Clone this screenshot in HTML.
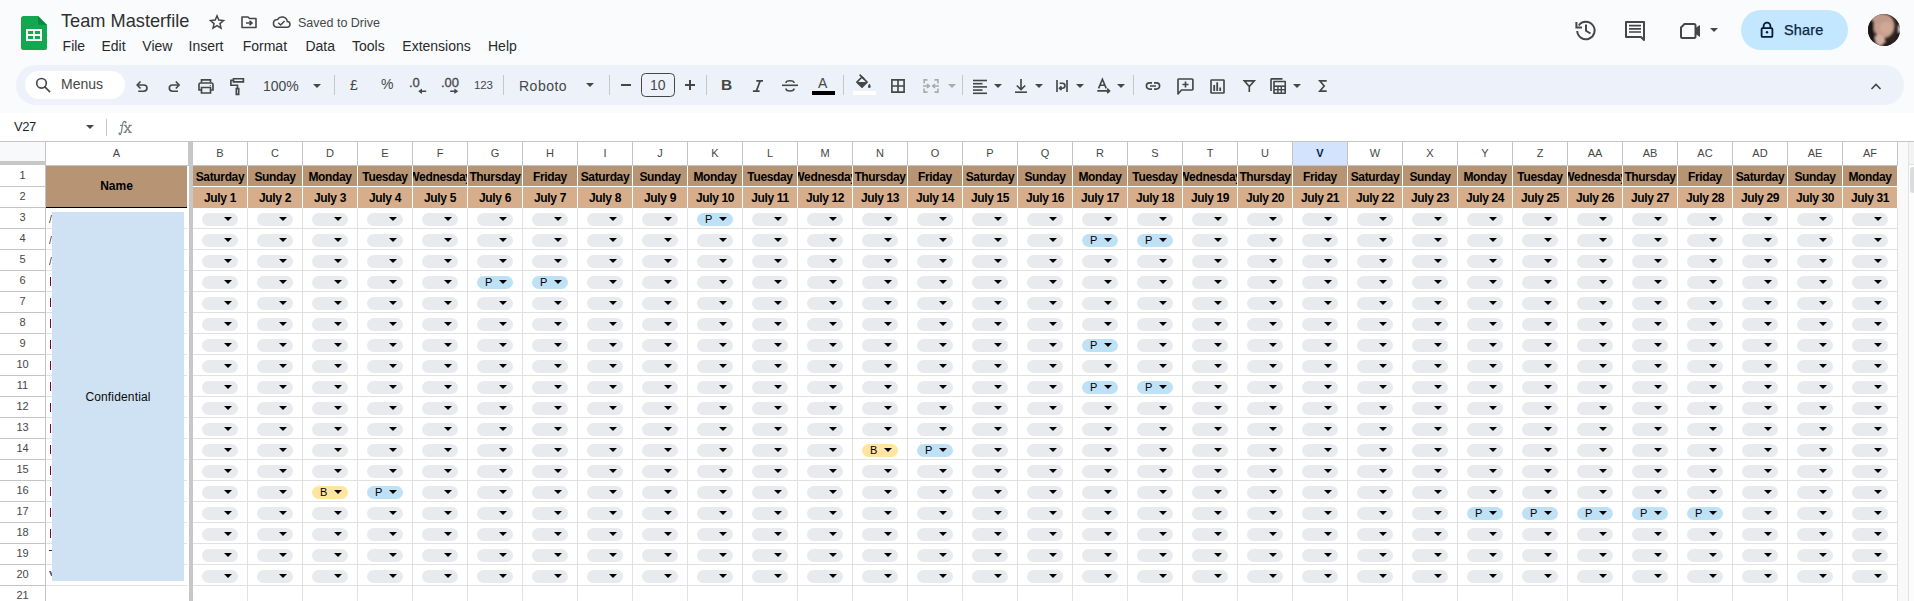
<!DOCTYPE html>
<html><head><meta charset="utf-8"><title>Team Masterfile</title>
<style>
*{box-sizing:border-box;margin:0;padding:0}
html,body{width:1914px;height:601px;overflow:hidden;background:#fff;font-family:"Liberation Sans",sans-serif}
.a{position:absolute}
.t{position:absolute;white-space:nowrap}
.c1{position:absolute;height:20px;width:54px;background:#b69474;overflow:hidden;display:flex;justify-content:center;white-space:nowrap;font-weight:bold;font-size:12px;line-height:22px;letter-spacing:-0.35px;color:#000}
.c2{position:absolute;height:21px;width:54px;background:#d6ae8c;overflow:hidden;display:flex;justify-content:center;white-space:nowrap;font-weight:bold;font-size:12px;line-height:22px;letter-spacing:-0.35px;color:#000}
.ch{position:absolute;width:36px;height:13px;border-radius:7px;background:#e8eaed}
.ar{position:absolute;width:0;height:0;border-left:4px solid transparent;border-right:4px solid transparent;border-top:4px solid #000}
.cl{position:absolute;font-size:11px;color:#000;line-height:13px}
.hd{position:absolute;top:142px;height:23px;width:54px;text-align:center;font-size:11px;line-height:23px;color:#444746}
.rn{position:absolute;left:0;width:45px;text-align:center;font-size:11px;line-height:20px;height:20px;color:#444746}
</style></head><body>

<div class="a" style="left:0;top:0;width:1914px;height:113px;background:#f9fbfd"></div>
<svg class="a" style="left:0;top:0" width="1914" height="113" viewBox="0 0 1914 113">
<path d="M23.5 16 H38 L47 25 V48 A2 2 0 0 1 45 50 H23.5 A2.5 2.5 0 0 1 21 47.5 V18.5 A2.5 2.5 0 0 1 23.5 16 Z" fill="#12a84f"/>
<path d="M38 16 L47 25 H40 A2 2 0 0 1 38 23 Z" fill="#0a8a3e"/>
<rect x="26" y="29" width="16" height="12" fill="#fff"/>
<rect x="28" y="31" width="5.2" height="3" fill="#12a84f"/>
<rect x="34.8" y="31" width="5.2" height="3" fill="#12a84f"/>
<rect x="28" y="36" width="5.2" height="3" fill="#12a84f"/>
<rect x="34.8" y="36" width="5.2" height="3" fill="#12a84f"/>

<path d="M217.00 15.80 L218.82 20.09 L223.47 20.50 L219.95 23.56 L221.00 28.10 L217.00 25.70 L213.00 28.10 L214.05 23.56 L210.53 20.50 L215.18 20.09 Z" fill="none" stroke="#444746" stroke-width="1.5" stroke-linejoin="miter"/>
<path d="M242 17 H248 L249.5 18.5 H256 V27.5 H242 Z" fill="none" stroke="#444746" stroke-width="1.6" stroke-linejoin="round"/>
<path d="M246 23 H251.5 M249.5 20.8 L252 23 L249.5 25.2" fill="none" stroke="#444746" stroke-width="1.6"/>
<path d="M276.5 27.2 H287 A2.8 2.8 0 0 0 287.3 21.6 A5.3 5.3 0 0 0 277.5 19.5 A3.9 3.9 0 0 0 276.5 27.2 Z" fill="none" stroke="#444746" stroke-width="1.5"/>
<path d="M278.3 22.8 L280.6 25 L284.6 21" fill="none" stroke="#444746" stroke-width="1.5"/>
<path d="M1578.8 25.5 A8.7 8.7 0 1 1 1577.2 31" fill="none" stroke="#444746" stroke-width="2"/>
<path d="M1576.4 22 V27.6 H1582" fill="none" stroke="#444746" stroke-width="2"/>
<path d="M1586 24.5 V30.8 L1590.5 33.5" fill="none" stroke="#444746" stroke-width="2"/>
<path d="M1626 22 H1644 V40 L1641 37 H1626 Z" fill="none" stroke="#444746" stroke-width="2" stroke-linejoin="round"/>
<path d="M1629 25.6 H1641 M1629 28.8 H1641 M1629 32 H1641" fill="none" stroke="#444746" stroke-width="1.7"/>
<path d="M1684.5 24 H1694 A1.5 1.5 0 0 1 1695.5 25.5 V36.5 A1.5 1.5 0 0 1 1694 38 H1682.5 A1.5 1.5 0 0 1 1681 36.5 V27.5 Z" fill="none" stroke="#444746" stroke-width="2" stroke-linejoin="round"/>
<path d="M1695.5 28 L1700 25 V37 L1695.5 34 Z" fill="#444746"/>
<path d="M1710 28 H1718 L1714 32 Z" fill="#444746"/>
<rect x="1741" y="10" width="107" height="40" rx="20" fill="#c2e7ff"/>
<path d="M1763.6 28 V26 A3.4 3.4 0 0 1 1770.4 26 V28" fill="none" stroke="#001d35" stroke-width="1.8"/>
<rect x="1761.6" y="28.2" width="10.8" height="8.7" rx="1" fill="none" stroke="#001d35" stroke-width="1.8"/>
<circle cx="1767" cy="32.3" r="1.2" fill="#001d35"/>
<defs><clipPath id="av"><circle cx="1884" cy="30" r="16"/></clipPath>
<filter id="bl" x="-20%" y="-20%" width="140%" height="140%"><feGaussianBlur stdDeviation="1.1"/></filter></defs>
<g clip-path="url(#av)"><rect x="1866" y="12" width="36" height="36" fill="#2e221f"/>
<g filter="url(#bl)">
<ellipse cx="1884" cy="26" rx="10.5" ry="12" fill="#c59d8c"/>
<ellipse cx="1879" cy="18" rx="8" ry="5" fill="#bf9a8a"/>
<ellipse cx="1886" cy="28" rx="6" ry="6" fill="#d0a896"/>
<ellipse cx="1880" cy="40" rx="5" ry="6" fill="#d2b0a2" transform="rotate(-30 1880 40)"/>
<path d="M1892 13 Q1899 18 1898 30 Q1897 40 1893 46 L1902 46 V12 Z" fill="#1e1614"/>
<path d="M1866 20 Q1872 17 1874 24 Q1873 34 1876 42 L1866 46 Z" fill="#1b1412"/>
<rect x="1898" y="26" width="3" height="6" fill="#d8d8d8"/>
<ellipse cx="1887" cy="45" rx="5" ry="3" fill="#231a18"/>
</g></g>
</svg>
<div class="t" style="left:61px;top:9px;font-size:18.2px;line-height:24px;color:#303030">Team Masterfile</div>
<div class="t" style="left:298px;top:15px;font-size:12.5px;line-height:16px;color:#444746">Saved to Drive</div>
<div class="t" style="left:62.6px;top:38px;font-size:14px;line-height:16px;color:#2a2a2a">File</div>
<div class="t" style="left:101.4px;top:38px;font-size:14px;line-height:16px;color:#2a2a2a">Edit</div>
<div class="t" style="left:142.3px;top:38px;font-size:14px;line-height:16px;color:#2a2a2a">View</div>
<div class="t" style="left:188.5px;top:38px;font-size:14px;line-height:16px;color:#2a2a2a">Insert</div>
<div class="t" style="left:242.7px;top:38px;font-size:14px;line-height:16px;color:#2a2a2a">Format</div>
<div class="t" style="left:305.4px;top:38px;font-size:14px;line-height:16px;color:#2a2a2a">Data</div>
<div class="t" style="left:352.0px;top:38px;font-size:14px;line-height:16px;color:#2a2a2a">Tools</div>
<div class="t" style="left:402.3px;top:38px;font-size:14px;line-height:16px;color:#2a2a2a">Extensions</div>
<div class="t" style="left:488.0px;top:38px;font-size:14px;line-height:16px;color:#2a2a2a">Help</div>
<div class="t" style="left:1784px;top:21px;font-size:14.5px;line-height:18px;color:#0a2540;-webkit-text-stroke:0.25px #0a2540;letter-spacing:0.15px">Share</div>
<div class="a" style="left:16px;top:65px;width:1888px;height:40px;border-radius:20px;background:#edf2fa"></div>
<div class="a" style="left:25px;top:71px;width:100px;height:28px;border-radius:14px;background:#fff"></div>
<svg class="a" style="left:0;top:60px" width="1914" height="50" viewBox="0 60 1914 50">
<circle cx="41.5" cy="83.3" r="4.8" fill="none" stroke="#444746" stroke-width="1.65"/>
<path d="M45 87 L49.5 91.5" fill="none" stroke="#444746" stroke-width="1.65" stroke-linecap="square"/>
<path d="M137.3 85 H143.6 A3.4 3.1 0 0 1 143.6 91.2 H138.2" fill="none" stroke="#444746" stroke-width="1.65" />
<path d="M140.5 81.5 L137.2 85 L140.5 88.5" fill="none" stroke="#444746" stroke-width="1.65" />
<path d="M179 85 H172.7 A3.4 3.1 0 0 0 172.7 91.2 H178" fill="none" stroke="#444746" stroke-width="1.65" />
<path d="M175.8 81.5 L179.1 85 L175.8 88.5" fill="none" stroke="#444746" stroke-width="1.65" />
<path d="M201.5 82.5 V79.8 H210.5 V82.5" fill="none" stroke="#444746" stroke-width="1.65" />
<path d="M201 90 H199 V84.5 A1.5 1.5 0 0 1 200.5 83 H211.5 A1.5 1.5 0 0 1 213 84.5 V90 H211" fill="none" stroke="#444746" stroke-width="1.65" />
<path d="M201.5 87.5 H210.5 V93 H201.5 Z" fill="none" stroke="#444746" stroke-width="1.65" />
<path d="M209.8 85 h1 v1 h-1 Z" fill="#444746"/>
<path d="M233.5 78.7 H243.4 V81.9 H233.5 Z" fill="none" stroke="#444746" stroke-width="1.65" />
<path d="M233 80.3 H230.9 V85.2 H237.5 V88.5" fill="none" stroke="#444746" stroke-width="1.65" />
<path d="M236.3 88.6 H238.7 V94.3 H236.3 Z" fill="none" stroke="#444746" stroke-width="1.65" />
</svg>
<div class="t" style="left:263px;top:77px;font-size:14px;line-height:18px;color:#444746">100%</div>
<svg class="a" style="left:0;top:60px" width="1914" height="50" viewBox="0 60 1914 50">
<path d="M313 84 H321 L317 88 Z" fill="#444746"/>
<rect x="334" y="75" width="1" height="20" fill="#c7c7c7"/>
<rect x="503" y="75" width="1" height="20" fill="#c7c7c7"/>
<path d="M586 83 H594 L590 87 Z" fill="#444746"/>
<rect x="609" y="75" width="1" height="20" fill="#c7c7c7"/>
<rect x="621" y="84" width="10" height="2" fill="#444746"/>
<rect x="641.5" y="73.5" width="33" height="23" rx="4" fill="none" stroke="#444746" stroke-width="1"/>
<rect x="685" y="84" width="10" height="2" fill="#444746"/><rect x="689" y="80" width="2" height="10" fill="#444746"/>
<rect x="706" y="75" width="1" height="20" fill="#c7c7c7"/>
<path d="M794 83 A4 2.3 0 0 0 786 83" fill="none" stroke="#444746" stroke-width="1.65" />
<path d="M786 88.6 A4 2.4 0 0 0 794 88.6" fill="none" stroke="#444746" stroke-width="1.65" />
<rect x="782" y="84.5" width="16" height="1.6" fill="#444746"/>
<rect x="812" y="91" width="23" height="4" fill="#000"/>
<rect x="843" y="75" width="1" height="20" fill="#c7c7c7"/>
<path d="M859.6 74.6 L864.2 79.2" fill="none" stroke="#444746" stroke-width="1.65" />
<path d="M862 77 L867.1 82.1 L862 87.2 L856.9 82.1 Z" fill="none" stroke="#444746" stroke-width="1.65" stroke-linejoin="round"/>
<path d="M857.2 82.1 H866.8 L862 86.9 Z" fill="#444746"/>
<path d="M869.3 83.6 Q867.7 85.8 868 86.8 A1.35 1.35 0 0 0 870.7 86.5 Q870.8 85.5 869.3 83.6 Z" fill="#444746"/>
<rect x="853" y="91" width="23" height="4" fill="#fff"/>
<path d="M891.9 79.9 H904.1 V92.1 H891.9 Z M898 79.9 V92.1 M891.9 86 H904.1" fill="none" stroke="#444746" stroke-width="1.65" />
<path d="M927.5 79.9 H924.1 V83.5 M924.1 88.5 V92.1 H927.5 M934.5 79.9 H937.9 V83.5 M937.9 88.5 V92.1 H934.5" fill="none" stroke="#a8abad" stroke-width="1.6"/>
<path d="M923 86 H929 M927 84 L929.3 86 L927 88 M939 86 H933 M935 84 L932.7 86 L935 88" fill="none" stroke="#a8abad" stroke-width="1.6"/>
<path d="M948 84 H956 L952 88 Z" fill="#a8abad"/>
<rect x="962" y="75" width="1" height="20" fill="#c7c7c7"/>
<rect x="973" y="79.7" width="14" height="1.6" fill="#444746"/>
<rect x="973" y="82.9" width="9.5" height="1.6" fill="#444746"/>
<rect x="973" y="86.10000000000001" width="14" height="1.6" fill="#444746"/>
<rect x="973" y="89.3" width="9.5" height="1.6" fill="#444746"/>
<rect x="973" y="92.5" width="14" height="1.6" fill="#444746"/>
<path d="M994 84 H1002 L998 88 Z" fill="#444746"/>
<path d="M1021 79 V89.5 M1016.8 85.5 L1021 89.7 L1025.2 85.5" fill="none" stroke="#444746" stroke-width="1.65" />
<rect x="1015" y="91.4" width="12" height="1.6" fill="#444746"/>
<path d="M1035 84 H1043 L1039 88 Z" fill="#444746"/>
<path d="M1057 80 V92 M1067 80 V92" fill="none" stroke="#444746" stroke-width="1.65" />
<path d="M1059.6 83.2 H1062.4 A2.5 2.5 0 0 1 1062.4 88.2 H1059.6 M1061.5 86.3 L1059.5 88.2 L1061.5 90.1" fill="none" stroke="#444746" stroke-width="1.65" />
<path d="M1076 84 H1084 L1080 88 Z" fill="#444746"/>
<path d="M1098.6 88.4 L1102.4 79.3 L1106.2 88.4 M1099.8 85.2 H1105" fill="none" stroke="#444746" stroke-width="1.65" />
<path d="M1097.3 90.9 H1109.4 M1107.2 88.7 L1109.5 90.9 L1107.2 93.1" fill="none" stroke="#444746" stroke-width="1.65" />
<path d="M1117 84 H1125 L1121 88 Z" fill="#444746"/>
<rect x="1133" y="75" width="1" height="20" fill="#c7c7c7"/>
<path d="M1152 82.9 H1149.5 A3.1 3.1 0 0 0 1149.5 89.1 H1152 M1154 82.9 H1156.5 A3.1 3.1 0 0 1 1156.5 89.1 H1154 M1150 86 H1156" fill="none" stroke="#444746" stroke-width="1.65" />
<path d="M1178 94 V79.9 A0.8 0.8 0 0 1 1179 79 H1192 A0.8 0.8 0 0 1 1192.9 79.9 V89.1 A0.8 0.8 0 0 1 1192 90 H1181.5 Z" fill="none" stroke="#444746" stroke-width="1.65" stroke-linejoin="round"/>
<path d="M1185.5 81.5 V87.5 M1182.5 84.5 H1188.5" fill="none" stroke="#444746" stroke-width="1.65" />
<path d="M1211 80.6 A0.6 0.6 0 0 1 1211.6 80 H1223.4 A0.6 0.6 0 0 1 1224 80.6 V92.4 A0.6 0.6 0 0 1 1223.4 93 H1211.6 A0.6 0.6 0 0 1 1211 92.4 Z" fill="none" stroke="#444746" stroke-width="1.65" />
<rect x="1213.3" y="85" width="1.8" height="6" fill="#444746"/><rect x="1216.3" y="82.3" width="1.8" height="8.7" fill="#444746"/><rect x="1219.3" y="87.5" width="1.8" height="3.5" fill="#444746"/>
<path d="M1244.3 80.9 H1254.3 L1249.3 86.6 Z M1249.3 86.4 V92" fill="none" stroke="#444746" stroke-width="1.65" stroke-linejoin="miter"/>
<path d="M1271 91 V79.5 A0.9 0.9 0 0 1 1272 78.9 H1282.5" fill="none" stroke="#444746" stroke-width="1.65" />
<path d="M1274 81.5 H1285.2 V93.2 H1274 Z" fill="none" stroke="#444746" stroke-width="1.65" stroke-linejoin="round"/>
<path d="M1275 83 H1284.2 V85.5 H1275 Z" fill="#edf2fa"/>
<rect x="1274" y="85.4" width="11.2" height="1.6" fill="#444746"/>
<rect x="1277.2" y="86" width="1.4" height="7" fill="#444746"/><rect x="1280.6" y="86" width="1.4" height="7" fill="#444746"/><rect x="1274" y="89" width="11" height="1.4" fill="#444746"/>
<path d="M1293 84 H1301 L1297 88 Z" fill="#444746"/>
<path d="M1326.7 80.9 H1319.8 L1324.2 86 L1319.8 91.1 H1326.7" fill="none" stroke="#444746" stroke-width="1.65" stroke-linejoin="miter"/>
<path d="M756.3 80.9 H763 M752.9 91.1 H759.6 M760.2 80.9 L756.3 91.1" fill="none" stroke="#444746" stroke-width="1.65" stroke-linejoin="miter"/>
<path d="M1871.5 89 L1876 84.5 L1880.5 89" fill="none" stroke="#444746" stroke-width="1.65" />
</svg>
<div class="t" style="left:61px;top:76px;font-size:14px;line-height:16px;color:#444746">Menus</div>
<div class="t" style="left:350px;top:77px;font-size:14px;line-height:16px;color:#444746">&#163;</div>
<div class="t" style="left:381px;top:76px;font-size:14px;line-height:16px;letter-spacing:-0.5px;color:#444746">%</div>
<div class="t" style="left:409px;top:76px;font-size:13px;line-height:14px;color:#444746;-webkit-text-stroke:0.3px #444746">.0</div>
<div class="t" style="left:441px;top:76px;font-size:13px;line-height:14px;color:#444746;-webkit-text-stroke:0.3px #444746">.00</div>
<svg class="a" style="left:0;top:60px" width="1914" height="50" viewBox="0 60 1914 50">
<path d="M418.2 91.3 L422 88.5 V90.5 H426.2 V92.1 H422 V94.1 Z" fill="#444746"/>
<path d="M458.2 91.3 L454.4 88.5 V90.5 H450.2 V92.1 H454.4 V94.1 Z" fill="#444746"/>
</svg>
<div class="t" style="left:474px;top:78px;font-size:11.5px;line-height:14px;letter-spacing:-0.2px;color:#444746">123</div>
<div class="t" style="left:519px;top:78px;font-size:14px;line-height:16px;color:#444746;letter-spacing:0.5px">Roboto</div>
<div class="t" style="left:650px;top:77px;font-size:14px;line-height:16px;color:#444746">10</div>
<div class="t" style="left:721px;top:76px;font-size:15.5px;line-height:17px;color:#444746;font-weight:bold">B</div>
<div class="t" style="left:818px;top:75px;font-size:14px;line-height:16px;color:#444746">A</div>
<div class="t" style="left:14px;top:119px;font-size:13px;line-height:15px;color:#1f1f1f;letter-spacing:-0.4px">V27</div>
<svg class="a" style="left:0;top:113px" width="200" height="28" viewBox="0 113 200 28">
<path d="M86 125 H94 L90 129 Z" fill="#444746"/>
<rect x="106" y="119" width="1" height="17" fill="#c7c7c7"/>
<path d="M126 122.7 Q125.4 120.9 123.9 121.5 Q122.9 122 122.6 124.4 L121.3 132.3 Q120.9 134.6 119.2 134.6" stroke="#80868b" stroke-width="1.3" fill="none"/>
<circle cx="125.5" cy="122.6" r="1" fill="#80868b"/><circle cx="119.4" cy="133.6" r="1.1" fill="#80868b"/>
<path d="M120 125.4 H123.2 M124 125.4 H126.6 M128.6 125.4 H131.8 M123.6 132.4 H126.4 M128.4 132.4 H131.8" stroke="#80868b" stroke-width="1.2" fill="none"/>
<path d="M125.2 125.4 L130.4 132.4 M130.2 125.4 L125 132.4" stroke="#80868b" stroke-width="1.5" fill="none"/>
</svg>
<div class="a" style="left:0;top:141px;width:1914px;height:1px;background:#c4c4c4"></div>
<div class="a" style="left:0;top:142px;width:45px;height:19px;background:#f8f9fa"></div>
<div class="a" style="left:0;top:161px;width:46px;height:4px;background:#c7c7c7"></div>
<div class="a" style="left:45px;top:142px;width:1px;height:459px;background:#c4c4c4"></div>
<div class="a" style="left:46px;top:165px;width:1852px;height:1px;background:#c4c4c4"></div>
<div class="hd" style="left:46px;width:141px">A</div>
<div class="a" style="left:188px;top:142px;width:5px;height:24px;background:#c7c7c7"></div>
<div class="a" style="left:189px;top:166px;width:4px;height:435px;background:#c7c7c7"></div>
<div class="rn" style="top:165px">1</div>
<div class="a" style="left:0;top:186px;width:45px;height:1px;background:#c4c4c4"></div>
<div class="rn" style="top:186px">2</div>
<div class="a" style="left:0;top:207px;width:45px;height:1px;background:#c4c4c4"></div>
<div class="rn" style="top:207px">3</div>
<div class="a" style="left:0;top:228px;width:45px;height:1px;background:#c4c4c4"></div>
<div class="rn" style="top:228px">4</div>
<div class="a" style="left:0;top:249px;width:45px;height:1px;background:#c4c4c4"></div>
<div class="rn" style="top:249px">5</div>
<div class="a" style="left:0;top:270px;width:45px;height:1px;background:#c4c4c4"></div>
<div class="rn" style="top:270px">6</div>
<div class="a" style="left:0;top:291px;width:45px;height:1px;background:#c4c4c4"></div>
<div class="rn" style="top:291px">7</div>
<div class="a" style="left:0;top:312px;width:45px;height:1px;background:#c4c4c4"></div>
<div class="rn" style="top:312px">8</div>
<div class="a" style="left:0;top:333px;width:45px;height:1px;background:#c4c4c4"></div>
<div class="rn" style="top:333px">9</div>
<div class="a" style="left:0;top:354px;width:45px;height:1px;background:#c4c4c4"></div>
<div class="rn" style="top:354px">10</div>
<div class="a" style="left:0;top:375px;width:45px;height:1px;background:#c4c4c4"></div>
<div class="rn" style="top:375px">11</div>
<div class="a" style="left:0;top:396px;width:45px;height:1px;background:#c4c4c4"></div>
<div class="rn" style="top:396px">12</div>
<div class="a" style="left:0;top:417px;width:45px;height:1px;background:#c4c4c4"></div>
<div class="rn" style="top:417px">13</div>
<div class="a" style="left:0;top:438px;width:45px;height:1px;background:#c4c4c4"></div>
<div class="rn" style="top:438px">14</div>
<div class="a" style="left:0;top:459px;width:45px;height:1px;background:#c4c4c4"></div>
<div class="rn" style="top:459px">15</div>
<div class="a" style="left:0;top:480px;width:45px;height:1px;background:#c4c4c4"></div>
<div class="rn" style="top:480px">16</div>
<div class="a" style="left:0;top:501px;width:45px;height:1px;background:#c4c4c4"></div>
<div class="rn" style="top:501px">17</div>
<div class="a" style="left:0;top:522px;width:45px;height:1px;background:#c4c4c4"></div>
<div class="rn" style="top:522px">18</div>
<div class="a" style="left:0;top:543px;width:45px;height:1px;background:#c4c4c4"></div>
<div class="rn" style="top:543px">19</div>
<div class="a" style="left:0;top:564px;width:45px;height:1px;background:#c4c4c4"></div>
<div class="rn" style="top:564px">20</div>
<div class="a" style="left:0;top:585px;width:45px;height:1px;background:#c4c4c4"></div>
<div class="rn" style="top:585px">21</div>
<div class="a" style="left:0;top:606px;width:45px;height:1px;background:#c4c4c4"></div>
<div class="a" style="left:46px;top:228px;width:141px;height:1px;background:#e1e1e1"></div>
<div class="a" style="left:193px;top:228px;width:1705px;height:1px;background:#e1e1e1"></div>
<div class="a" style="left:46px;top:249px;width:141px;height:1px;background:#e1e1e1"></div>
<div class="a" style="left:193px;top:249px;width:1705px;height:1px;background:#e1e1e1"></div>
<div class="a" style="left:46px;top:270px;width:141px;height:1px;background:#e1e1e1"></div>
<div class="a" style="left:193px;top:270px;width:1705px;height:1px;background:#e1e1e1"></div>
<div class="a" style="left:46px;top:291px;width:141px;height:1px;background:#e1e1e1"></div>
<div class="a" style="left:193px;top:291px;width:1705px;height:1px;background:#e1e1e1"></div>
<div class="a" style="left:46px;top:312px;width:141px;height:1px;background:#e1e1e1"></div>
<div class="a" style="left:193px;top:312px;width:1705px;height:1px;background:#e1e1e1"></div>
<div class="a" style="left:46px;top:333px;width:141px;height:1px;background:#e1e1e1"></div>
<div class="a" style="left:193px;top:333px;width:1705px;height:1px;background:#e1e1e1"></div>
<div class="a" style="left:46px;top:354px;width:141px;height:1px;background:#e1e1e1"></div>
<div class="a" style="left:193px;top:354px;width:1705px;height:1px;background:#e1e1e1"></div>
<div class="a" style="left:46px;top:375px;width:141px;height:1px;background:#e1e1e1"></div>
<div class="a" style="left:193px;top:375px;width:1705px;height:1px;background:#e1e1e1"></div>
<div class="a" style="left:46px;top:396px;width:141px;height:1px;background:#e1e1e1"></div>
<div class="a" style="left:193px;top:396px;width:1705px;height:1px;background:#e1e1e1"></div>
<div class="a" style="left:46px;top:417px;width:141px;height:1px;background:#e1e1e1"></div>
<div class="a" style="left:193px;top:417px;width:1705px;height:1px;background:#e1e1e1"></div>
<div class="a" style="left:46px;top:438px;width:141px;height:1px;background:#e1e1e1"></div>
<div class="a" style="left:193px;top:438px;width:1705px;height:1px;background:#e1e1e1"></div>
<div class="a" style="left:46px;top:459px;width:141px;height:1px;background:#e1e1e1"></div>
<div class="a" style="left:193px;top:459px;width:1705px;height:1px;background:#e1e1e1"></div>
<div class="a" style="left:46px;top:480px;width:141px;height:1px;background:#e1e1e1"></div>
<div class="a" style="left:193px;top:480px;width:1705px;height:1px;background:#e1e1e1"></div>
<div class="a" style="left:46px;top:501px;width:141px;height:1px;background:#e1e1e1"></div>
<div class="a" style="left:193px;top:501px;width:1705px;height:1px;background:#e1e1e1"></div>
<div class="a" style="left:46px;top:522px;width:141px;height:1px;background:#e1e1e1"></div>
<div class="a" style="left:193px;top:522px;width:1705px;height:1px;background:#e1e1e1"></div>
<div class="a" style="left:46px;top:543px;width:141px;height:1px;background:#e1e1e1"></div>
<div class="a" style="left:193px;top:543px;width:1705px;height:1px;background:#e1e1e1"></div>
<div class="a" style="left:46px;top:564px;width:141px;height:1px;background:#e1e1e1"></div>
<div class="a" style="left:193px;top:564px;width:1705px;height:1px;background:#e1e1e1"></div>
<div class="a" style="left:46px;top:585px;width:141px;height:1px;background:#e1e1e1"></div>
<div class="a" style="left:193px;top:585px;width:1705px;height:1px;background:#e1e1e1"></div>
<div class="a" style="left:46px;top:606px;width:141px;height:1px;background:#e1e1e1"></div>
<div class="a" style="left:193px;top:606px;width:1705px;height:1px;background:#e1e1e1"></div>
<div class="a" style="left:247px;top:142px;width:1px;height:23px;background:#c4c4c4"></div>
<div class="a" style="left:247px;top:166px;width:1px;height:42px;background:#fff"></div>
<div class="a" style="left:247px;top:208px;width:1px;height:393px;background:#e1e1e1"></div>
<div class="a" style="left:302px;top:142px;width:1px;height:23px;background:#c4c4c4"></div>
<div class="a" style="left:302px;top:166px;width:1px;height:42px;background:#fff"></div>
<div class="a" style="left:302px;top:208px;width:1px;height:393px;background:#e1e1e1"></div>
<div class="a" style="left:357px;top:142px;width:1px;height:23px;background:#c4c4c4"></div>
<div class="a" style="left:357px;top:166px;width:1px;height:42px;background:#fff"></div>
<div class="a" style="left:357px;top:208px;width:1px;height:393px;background:#e1e1e1"></div>
<div class="a" style="left:412px;top:142px;width:1px;height:23px;background:#c4c4c4"></div>
<div class="a" style="left:412px;top:166px;width:1px;height:42px;background:#fff"></div>
<div class="a" style="left:412px;top:208px;width:1px;height:393px;background:#e1e1e1"></div>
<div class="a" style="left:467px;top:142px;width:1px;height:23px;background:#c4c4c4"></div>
<div class="a" style="left:467px;top:166px;width:1px;height:42px;background:#fff"></div>
<div class="a" style="left:467px;top:208px;width:1px;height:393px;background:#e1e1e1"></div>
<div class="a" style="left:522px;top:142px;width:1px;height:23px;background:#c4c4c4"></div>
<div class="a" style="left:522px;top:166px;width:1px;height:42px;background:#fff"></div>
<div class="a" style="left:522px;top:208px;width:1px;height:393px;background:#e1e1e1"></div>
<div class="a" style="left:577px;top:142px;width:1px;height:23px;background:#c4c4c4"></div>
<div class="a" style="left:577px;top:166px;width:1px;height:42px;background:#fff"></div>
<div class="a" style="left:577px;top:208px;width:1px;height:393px;background:#e1e1e1"></div>
<div class="a" style="left:632px;top:142px;width:1px;height:23px;background:#c4c4c4"></div>
<div class="a" style="left:632px;top:166px;width:1px;height:42px;background:#fff"></div>
<div class="a" style="left:632px;top:208px;width:1px;height:393px;background:#e1e1e1"></div>
<div class="a" style="left:687px;top:142px;width:1px;height:23px;background:#c4c4c4"></div>
<div class="a" style="left:687px;top:166px;width:1px;height:42px;background:#fff"></div>
<div class="a" style="left:687px;top:208px;width:1px;height:393px;background:#e1e1e1"></div>
<div class="a" style="left:742px;top:142px;width:1px;height:23px;background:#c4c4c4"></div>
<div class="a" style="left:742px;top:166px;width:1px;height:42px;background:#fff"></div>
<div class="a" style="left:742px;top:208px;width:1px;height:393px;background:#e1e1e1"></div>
<div class="a" style="left:797px;top:142px;width:1px;height:23px;background:#c4c4c4"></div>
<div class="a" style="left:797px;top:166px;width:1px;height:42px;background:#fff"></div>
<div class="a" style="left:797px;top:208px;width:1px;height:393px;background:#e1e1e1"></div>
<div class="a" style="left:852px;top:142px;width:1px;height:23px;background:#c4c4c4"></div>
<div class="a" style="left:852px;top:166px;width:1px;height:42px;background:#fff"></div>
<div class="a" style="left:852px;top:208px;width:1px;height:393px;background:#e1e1e1"></div>
<div class="a" style="left:907px;top:142px;width:1px;height:23px;background:#c4c4c4"></div>
<div class="a" style="left:907px;top:166px;width:1px;height:42px;background:#fff"></div>
<div class="a" style="left:907px;top:208px;width:1px;height:393px;background:#e1e1e1"></div>
<div class="a" style="left:962px;top:142px;width:1px;height:23px;background:#c4c4c4"></div>
<div class="a" style="left:962px;top:166px;width:1px;height:42px;background:#fff"></div>
<div class="a" style="left:962px;top:208px;width:1px;height:393px;background:#e1e1e1"></div>
<div class="a" style="left:1017px;top:142px;width:1px;height:23px;background:#c4c4c4"></div>
<div class="a" style="left:1017px;top:166px;width:1px;height:42px;background:#fff"></div>
<div class="a" style="left:1017px;top:208px;width:1px;height:393px;background:#e1e1e1"></div>
<div class="a" style="left:1072px;top:142px;width:1px;height:23px;background:#c4c4c4"></div>
<div class="a" style="left:1072px;top:166px;width:1px;height:42px;background:#fff"></div>
<div class="a" style="left:1072px;top:208px;width:1px;height:393px;background:#e1e1e1"></div>
<div class="a" style="left:1127px;top:142px;width:1px;height:23px;background:#c4c4c4"></div>
<div class="a" style="left:1127px;top:166px;width:1px;height:42px;background:#fff"></div>
<div class="a" style="left:1127px;top:208px;width:1px;height:393px;background:#e1e1e1"></div>
<div class="a" style="left:1182px;top:142px;width:1px;height:23px;background:#c4c4c4"></div>
<div class="a" style="left:1182px;top:166px;width:1px;height:42px;background:#fff"></div>
<div class="a" style="left:1182px;top:208px;width:1px;height:393px;background:#e1e1e1"></div>
<div class="a" style="left:1237px;top:142px;width:1px;height:23px;background:#c4c4c4"></div>
<div class="a" style="left:1237px;top:166px;width:1px;height:42px;background:#fff"></div>
<div class="a" style="left:1237px;top:208px;width:1px;height:393px;background:#e1e1e1"></div>
<div class="a" style="left:1292px;top:142px;width:1px;height:23px;background:#c4c4c4"></div>
<div class="a" style="left:1292px;top:166px;width:1px;height:42px;background:#fff"></div>
<div class="a" style="left:1292px;top:208px;width:1px;height:393px;background:#e1e1e1"></div>
<div class="a" style="left:1347px;top:142px;width:1px;height:23px;background:#c4c4c4"></div>
<div class="a" style="left:1347px;top:166px;width:1px;height:42px;background:#fff"></div>
<div class="a" style="left:1347px;top:208px;width:1px;height:393px;background:#e1e1e1"></div>
<div class="a" style="left:1402px;top:142px;width:1px;height:23px;background:#c4c4c4"></div>
<div class="a" style="left:1402px;top:166px;width:1px;height:42px;background:#fff"></div>
<div class="a" style="left:1402px;top:208px;width:1px;height:393px;background:#e1e1e1"></div>
<div class="a" style="left:1457px;top:142px;width:1px;height:23px;background:#c4c4c4"></div>
<div class="a" style="left:1457px;top:166px;width:1px;height:42px;background:#fff"></div>
<div class="a" style="left:1457px;top:208px;width:1px;height:393px;background:#e1e1e1"></div>
<div class="a" style="left:1512px;top:142px;width:1px;height:23px;background:#c4c4c4"></div>
<div class="a" style="left:1512px;top:166px;width:1px;height:42px;background:#fff"></div>
<div class="a" style="left:1512px;top:208px;width:1px;height:393px;background:#e1e1e1"></div>
<div class="a" style="left:1567px;top:142px;width:1px;height:23px;background:#c4c4c4"></div>
<div class="a" style="left:1567px;top:166px;width:1px;height:42px;background:#fff"></div>
<div class="a" style="left:1567px;top:208px;width:1px;height:393px;background:#e1e1e1"></div>
<div class="a" style="left:1622px;top:142px;width:1px;height:23px;background:#c4c4c4"></div>
<div class="a" style="left:1622px;top:166px;width:1px;height:42px;background:#fff"></div>
<div class="a" style="left:1622px;top:208px;width:1px;height:393px;background:#e1e1e1"></div>
<div class="a" style="left:1677px;top:142px;width:1px;height:23px;background:#c4c4c4"></div>
<div class="a" style="left:1677px;top:166px;width:1px;height:42px;background:#fff"></div>
<div class="a" style="left:1677px;top:208px;width:1px;height:393px;background:#e1e1e1"></div>
<div class="a" style="left:1732px;top:142px;width:1px;height:23px;background:#c4c4c4"></div>
<div class="a" style="left:1732px;top:166px;width:1px;height:42px;background:#fff"></div>
<div class="a" style="left:1732px;top:208px;width:1px;height:393px;background:#e1e1e1"></div>
<div class="a" style="left:1787px;top:142px;width:1px;height:23px;background:#c4c4c4"></div>
<div class="a" style="left:1787px;top:166px;width:1px;height:42px;background:#fff"></div>
<div class="a" style="left:1787px;top:208px;width:1px;height:393px;background:#e1e1e1"></div>
<div class="a" style="left:1842px;top:142px;width:1px;height:23px;background:#c4c4c4"></div>
<div class="a" style="left:1842px;top:166px;width:1px;height:42px;background:#fff"></div>
<div class="a" style="left:1842px;top:208px;width:1px;height:393px;background:#e1e1e1"></div>
<div class="a" style="left:1897px;top:142px;width:1px;height:23px;background:#c4c4c4"></div>
<div class="a" style="left:1897px;top:166px;width:1px;height:42px;background:#fff"></div>
<div class="a" style="left:1897px;top:208px;width:1px;height:393px;background:#e1e1e1"></div>
<div class="a" style="left:1293px;top:142px;width:54px;height:23px;background:#d3e3fd"></div>
<div class="hd" style="left:193px">B</div>
<div class="hd" style="left:248px">C</div>
<div class="hd" style="left:303px">D</div>
<div class="hd" style="left:358px">E</div>
<div class="hd" style="left:413px">F</div>
<div class="hd" style="left:468px">G</div>
<div class="hd" style="left:523px">H</div>
<div class="hd" style="left:578px">I</div>
<div class="hd" style="left:633px">J</div>
<div class="hd" style="left:688px">K</div>
<div class="hd" style="left:743px">L</div>
<div class="hd" style="left:798px">M</div>
<div class="hd" style="left:853px">N</div>
<div class="hd" style="left:908px">O</div>
<div class="hd" style="left:963px">P</div>
<div class="hd" style="left:1018px">Q</div>
<div class="hd" style="left:1073px">R</div>
<div class="hd" style="left:1128px">S</div>
<div class="hd" style="left:1183px">T</div>
<div class="hd" style="left:1238px">U</div>
<div class="hd" style="left:1293px;font-weight:bold;color:#041e49">V</div>
<div class="hd" style="left:1348px">W</div>
<div class="hd" style="left:1403px">X</div>
<div class="hd" style="left:1458px">Y</div>
<div class="hd" style="left:1513px">Z</div>
<div class="hd" style="left:1568px">AA</div>
<div class="hd" style="left:1623px">AB</div>
<div class="hd" style="left:1678px">AC</div>
<div class="hd" style="left:1733px">AD</div>
<div class="hd" style="left:1788px">AE</div>
<div class="hd" style="left:1843px">AF</div>
<div class="a" style="left:46px;top:166px;width:141px;height:41px;background:#b69474"></div>
<div class="a" style="left:46px;top:207px;width:141px;height:1px;background:#000"></div>
<div class="t" style="left:46px;top:176px;width:141px;text-align:center;font-weight:bold;font-size:12px;line-height:20px;color:#000">Name</div>
<div class="c1" style="left:193px;top:166px">Saturday</div>
<div class="c2" style="left:193px;top:187px">July 1</div>
<div class="c1" style="left:248px;top:166px">Sunday</div>
<div class="c2" style="left:248px;top:187px">July 2</div>
<div class="c1" style="left:303px;top:166px">Monday</div>
<div class="c2" style="left:303px;top:187px">July 3</div>
<div class="c1" style="left:358px;top:166px">Tuesday</div>
<div class="c2" style="left:358px;top:187px">July 4</div>
<div class="c1" style="left:413px;top:166px">Wednesday</div>
<div class="c2" style="left:413px;top:187px">July 5</div>
<div class="c1" style="left:468px;top:166px">Thursday</div>
<div class="c2" style="left:468px;top:187px">July 6</div>
<div class="c1" style="left:523px;top:166px">Friday</div>
<div class="c2" style="left:523px;top:187px">July 7</div>
<div class="c1" style="left:578px;top:166px">Saturday</div>
<div class="c2" style="left:578px;top:187px">July 8</div>
<div class="c1" style="left:633px;top:166px">Sunday</div>
<div class="c2" style="left:633px;top:187px">July 9</div>
<div class="c1" style="left:688px;top:166px">Monday</div>
<div class="c2" style="left:688px;top:187px">July 10</div>
<div class="c1" style="left:743px;top:166px">Tuesday</div>
<div class="c2" style="left:743px;top:187px">July 11</div>
<div class="c1" style="left:798px;top:166px">Wednesday</div>
<div class="c2" style="left:798px;top:187px">July 12</div>
<div class="c1" style="left:853px;top:166px">Thursday</div>
<div class="c2" style="left:853px;top:187px">July 13</div>
<div class="c1" style="left:908px;top:166px">Friday</div>
<div class="c2" style="left:908px;top:187px">July 14</div>
<div class="c1" style="left:963px;top:166px">Saturday</div>
<div class="c2" style="left:963px;top:187px">July 15</div>
<div class="c1" style="left:1018px;top:166px">Sunday</div>
<div class="c2" style="left:1018px;top:187px">July 16</div>
<div class="c1" style="left:1073px;top:166px">Monday</div>
<div class="c2" style="left:1073px;top:187px">July 17</div>
<div class="c1" style="left:1128px;top:166px">Tuesday</div>
<div class="c2" style="left:1128px;top:187px">July 18</div>
<div class="c1" style="left:1183px;top:166px">Wednesday</div>
<div class="c2" style="left:1183px;top:187px">July 19</div>
<div class="c1" style="left:1238px;top:166px">Thursday</div>
<div class="c2" style="left:1238px;top:187px">July 20</div>
<div class="c1" style="left:1293px;top:166px">Friday</div>
<div class="c2" style="left:1293px;top:187px">July 21</div>
<div class="c1" style="left:1348px;top:166px">Saturday</div>
<div class="c2" style="left:1348px;top:187px">July 22</div>
<div class="c1" style="left:1403px;top:166px">Sunday</div>
<div class="c2" style="left:1403px;top:187px">July 23</div>
<div class="c1" style="left:1458px;top:166px">Monday</div>
<div class="c2" style="left:1458px;top:187px">July 24</div>
<div class="c1" style="left:1513px;top:166px">Tuesday</div>
<div class="c2" style="left:1513px;top:187px">July 25</div>
<div class="c1" style="left:1568px;top:166px">Wednesday</div>
<div class="c2" style="left:1568px;top:187px">July 26</div>
<div class="c1" style="left:1623px;top:166px">Thursday</div>
<div class="c2" style="left:1623px;top:187px">July 27</div>
<div class="c1" style="left:1678px;top:166px">Friday</div>
<div class="c2" style="left:1678px;top:187px">July 28</div>
<div class="c1" style="left:1733px;top:166px">Saturday</div>
<div class="c2" style="left:1733px;top:187px">July 29</div>
<div class="c1" style="left:1788px;top:166px">Sunday</div>
<div class="c2" style="left:1788px;top:187px">July 30</div>
<div class="c1" style="left:1843px;top:166px">Monday</div>
<div class="c2" style="left:1843px;top:187px">July 31</div>
<div class="a" style="left:49.5px;top:215px;width:1.4px;height:8px;background:#4a3020;opacity:.8;transform:skewX(-14deg)"></div>
<div class="a" style="left:49.5px;top:236px;width:1.4px;height:8px;background:#4a3020;opacity:.8;transform:skewX(-14deg)"></div>
<div class="a" style="left:49.5px;top:257px;width:1.4px;height:8px;background:#4a3020;opacity:.8;transform:skewX(-14deg)"></div>
<div class="a" style="left:49.6px;top:277px;width:1.6px;height:9px;background:#7a0a2a"></div>
<div class="a" style="left:49.6px;top:298px;width:1.6px;height:9px;background:#7a0a2a"></div>
<div class="a" style="left:49.6px;top:319px;width:1.6px;height:9px;background:#7a0a2a"></div>
<div class="a" style="left:49.6px;top:340px;width:1.6px;height:9px;background:#7a0a2a"></div>
<div class="a" style="left:49.6px;top:361px;width:1.6px;height:9px;background:#7a0a2a"></div>
<div class="a" style="left:49.6px;top:382px;width:1.6px;height:9px;background:#7a0a2a"></div>
<div class="a" style="left:49.6px;top:403px;width:1.6px;height:9px;background:#7a0a2a"></div>
<div class="a" style="left:49.6px;top:424px;width:1.6px;height:9px;background:#7a0a2a"></div>
<div class="a" style="left:49.6px;top:445px;width:1.6px;height:9px;background:#7a0a2a"></div>
<div class="a" style="left:49.6px;top:466px;width:1.6px;height:9px;background:#7a0a2a"></div>
<div class="a" style="left:49.6px;top:487px;width:1.6px;height:9px;background:#7a0a2a"></div>
<div class="a" style="left:49.6px;top:508px;width:1.6px;height:9px;background:#7a0a2a"></div>
<div class="a" style="left:49.6px;top:529px;width:1.6px;height:9px;background:#7a0a2a"></div>
<div class="a" style="left:49px;top:550px;width:3px;height:1.3px;background:#333"></div>
<div class="a" style="left:50px;top:571px;width:1.5px;height:5px;background:#3a3550;opacity:.8;transform:skewX(22deg)"></div>
<div class="a" style="left:52px;top:212px;width:132px;height:369px;background:#cfe2f3"></div>
<div class="t" style="left:52px;top:388px;width:132px;text-align:center;font-size:12px;line-height:18px;letter-spacing:0.15px;color:#0a0a0a">Confidential</div>
<div class="ch" style="left:202px;top:213px"></div>
<div class="ar" style="left:224px;top:217px"></div>
<div class="ch" style="left:257px;top:213px"></div>
<div class="ar" style="left:279px;top:217px"></div>
<div class="ch" style="left:312px;top:213px"></div>
<div class="ar" style="left:334px;top:217px"></div>
<div class="ch" style="left:367px;top:213px"></div>
<div class="ar" style="left:389px;top:217px"></div>
<div class="ch" style="left:422px;top:213px"></div>
<div class="ar" style="left:444px;top:217px"></div>
<div class="ch" style="left:477px;top:213px"></div>
<div class="ar" style="left:499px;top:217px"></div>
<div class="ch" style="left:532px;top:213px"></div>
<div class="ar" style="left:554px;top:217px"></div>
<div class="ch" style="left:587px;top:213px"></div>
<div class="ar" style="left:609px;top:217px"></div>
<div class="ch" style="left:642px;top:213px"></div>
<div class="ar" style="left:664px;top:217px"></div>
<div class="ch" style="left:697px;top:213px;background:#bfe1f6"></div>
<div class="ar" style="left:719px;top:217px"></div>
<div class="cl" style="left:705px;top:213px">P</div>
<div class="ch" style="left:752px;top:213px"></div>
<div class="ar" style="left:774px;top:217px"></div>
<div class="ch" style="left:807px;top:213px"></div>
<div class="ar" style="left:829px;top:217px"></div>
<div class="ch" style="left:862px;top:213px"></div>
<div class="ar" style="left:884px;top:217px"></div>
<div class="ch" style="left:917px;top:213px"></div>
<div class="ar" style="left:939px;top:217px"></div>
<div class="ch" style="left:972px;top:213px"></div>
<div class="ar" style="left:994px;top:217px"></div>
<div class="ch" style="left:1027px;top:213px"></div>
<div class="ar" style="left:1049px;top:217px"></div>
<div class="ch" style="left:1082px;top:213px"></div>
<div class="ar" style="left:1104px;top:217px"></div>
<div class="ch" style="left:1137px;top:213px"></div>
<div class="ar" style="left:1159px;top:217px"></div>
<div class="ch" style="left:1192px;top:213px"></div>
<div class="ar" style="left:1214px;top:217px"></div>
<div class="ch" style="left:1247px;top:213px"></div>
<div class="ar" style="left:1269px;top:217px"></div>
<div class="ch" style="left:1302px;top:213px"></div>
<div class="ar" style="left:1324px;top:217px"></div>
<div class="ch" style="left:1357px;top:213px"></div>
<div class="ar" style="left:1379px;top:217px"></div>
<div class="ch" style="left:1412px;top:213px"></div>
<div class="ar" style="left:1434px;top:217px"></div>
<div class="ch" style="left:1467px;top:213px"></div>
<div class="ar" style="left:1489px;top:217px"></div>
<div class="ch" style="left:1522px;top:213px"></div>
<div class="ar" style="left:1544px;top:217px"></div>
<div class="ch" style="left:1577px;top:213px"></div>
<div class="ar" style="left:1599px;top:217px"></div>
<div class="ch" style="left:1632px;top:213px"></div>
<div class="ar" style="left:1654px;top:217px"></div>
<div class="ch" style="left:1687px;top:213px"></div>
<div class="ar" style="left:1709px;top:217px"></div>
<div class="ch" style="left:1742px;top:213px"></div>
<div class="ar" style="left:1764px;top:217px"></div>
<div class="ch" style="left:1797px;top:213px"></div>
<div class="ar" style="left:1819px;top:217px"></div>
<div class="ch" style="left:1852px;top:213px"></div>
<div class="ar" style="left:1874px;top:217px"></div>
<div class="ch" style="left:202px;top:234px"></div>
<div class="ar" style="left:224px;top:238px"></div>
<div class="ch" style="left:257px;top:234px"></div>
<div class="ar" style="left:279px;top:238px"></div>
<div class="ch" style="left:312px;top:234px"></div>
<div class="ar" style="left:334px;top:238px"></div>
<div class="ch" style="left:367px;top:234px"></div>
<div class="ar" style="left:389px;top:238px"></div>
<div class="ch" style="left:422px;top:234px"></div>
<div class="ar" style="left:444px;top:238px"></div>
<div class="ch" style="left:477px;top:234px"></div>
<div class="ar" style="left:499px;top:238px"></div>
<div class="ch" style="left:532px;top:234px"></div>
<div class="ar" style="left:554px;top:238px"></div>
<div class="ch" style="left:587px;top:234px"></div>
<div class="ar" style="left:609px;top:238px"></div>
<div class="ch" style="left:642px;top:234px"></div>
<div class="ar" style="left:664px;top:238px"></div>
<div class="ch" style="left:697px;top:234px"></div>
<div class="ar" style="left:719px;top:238px"></div>
<div class="ch" style="left:752px;top:234px"></div>
<div class="ar" style="left:774px;top:238px"></div>
<div class="ch" style="left:807px;top:234px"></div>
<div class="ar" style="left:829px;top:238px"></div>
<div class="ch" style="left:862px;top:234px"></div>
<div class="ar" style="left:884px;top:238px"></div>
<div class="ch" style="left:917px;top:234px"></div>
<div class="ar" style="left:939px;top:238px"></div>
<div class="ch" style="left:972px;top:234px"></div>
<div class="ar" style="left:994px;top:238px"></div>
<div class="ch" style="left:1027px;top:234px"></div>
<div class="ar" style="left:1049px;top:238px"></div>
<div class="ch" style="left:1082px;top:234px;background:#bfe1f6"></div>
<div class="ar" style="left:1104px;top:238px"></div>
<div class="cl" style="left:1090px;top:234px">P</div>
<div class="ch" style="left:1137px;top:234px;background:#bfe1f6"></div>
<div class="ar" style="left:1159px;top:238px"></div>
<div class="cl" style="left:1145px;top:234px">P</div>
<div class="ch" style="left:1192px;top:234px"></div>
<div class="ar" style="left:1214px;top:238px"></div>
<div class="ch" style="left:1247px;top:234px"></div>
<div class="ar" style="left:1269px;top:238px"></div>
<div class="ch" style="left:1302px;top:234px"></div>
<div class="ar" style="left:1324px;top:238px"></div>
<div class="ch" style="left:1357px;top:234px"></div>
<div class="ar" style="left:1379px;top:238px"></div>
<div class="ch" style="left:1412px;top:234px"></div>
<div class="ar" style="left:1434px;top:238px"></div>
<div class="ch" style="left:1467px;top:234px"></div>
<div class="ar" style="left:1489px;top:238px"></div>
<div class="ch" style="left:1522px;top:234px"></div>
<div class="ar" style="left:1544px;top:238px"></div>
<div class="ch" style="left:1577px;top:234px"></div>
<div class="ar" style="left:1599px;top:238px"></div>
<div class="ch" style="left:1632px;top:234px"></div>
<div class="ar" style="left:1654px;top:238px"></div>
<div class="ch" style="left:1687px;top:234px"></div>
<div class="ar" style="left:1709px;top:238px"></div>
<div class="ch" style="left:1742px;top:234px"></div>
<div class="ar" style="left:1764px;top:238px"></div>
<div class="ch" style="left:1797px;top:234px"></div>
<div class="ar" style="left:1819px;top:238px"></div>
<div class="ch" style="left:1852px;top:234px"></div>
<div class="ar" style="left:1874px;top:238px"></div>
<div class="ch" style="left:202px;top:255px"></div>
<div class="ar" style="left:224px;top:259px"></div>
<div class="ch" style="left:257px;top:255px"></div>
<div class="ar" style="left:279px;top:259px"></div>
<div class="ch" style="left:312px;top:255px"></div>
<div class="ar" style="left:334px;top:259px"></div>
<div class="ch" style="left:367px;top:255px"></div>
<div class="ar" style="left:389px;top:259px"></div>
<div class="ch" style="left:422px;top:255px"></div>
<div class="ar" style="left:444px;top:259px"></div>
<div class="ch" style="left:477px;top:255px"></div>
<div class="ar" style="left:499px;top:259px"></div>
<div class="ch" style="left:532px;top:255px"></div>
<div class="ar" style="left:554px;top:259px"></div>
<div class="ch" style="left:587px;top:255px"></div>
<div class="ar" style="left:609px;top:259px"></div>
<div class="ch" style="left:642px;top:255px"></div>
<div class="ar" style="left:664px;top:259px"></div>
<div class="ch" style="left:697px;top:255px"></div>
<div class="ar" style="left:719px;top:259px"></div>
<div class="ch" style="left:752px;top:255px"></div>
<div class="ar" style="left:774px;top:259px"></div>
<div class="ch" style="left:807px;top:255px"></div>
<div class="ar" style="left:829px;top:259px"></div>
<div class="ch" style="left:862px;top:255px"></div>
<div class="ar" style="left:884px;top:259px"></div>
<div class="ch" style="left:917px;top:255px"></div>
<div class="ar" style="left:939px;top:259px"></div>
<div class="ch" style="left:972px;top:255px"></div>
<div class="ar" style="left:994px;top:259px"></div>
<div class="ch" style="left:1027px;top:255px"></div>
<div class="ar" style="left:1049px;top:259px"></div>
<div class="ch" style="left:1082px;top:255px"></div>
<div class="ar" style="left:1104px;top:259px"></div>
<div class="ch" style="left:1137px;top:255px"></div>
<div class="ar" style="left:1159px;top:259px"></div>
<div class="ch" style="left:1192px;top:255px"></div>
<div class="ar" style="left:1214px;top:259px"></div>
<div class="ch" style="left:1247px;top:255px"></div>
<div class="ar" style="left:1269px;top:259px"></div>
<div class="ch" style="left:1302px;top:255px"></div>
<div class="ar" style="left:1324px;top:259px"></div>
<div class="ch" style="left:1357px;top:255px"></div>
<div class="ar" style="left:1379px;top:259px"></div>
<div class="ch" style="left:1412px;top:255px"></div>
<div class="ar" style="left:1434px;top:259px"></div>
<div class="ch" style="left:1467px;top:255px"></div>
<div class="ar" style="left:1489px;top:259px"></div>
<div class="ch" style="left:1522px;top:255px"></div>
<div class="ar" style="left:1544px;top:259px"></div>
<div class="ch" style="left:1577px;top:255px"></div>
<div class="ar" style="left:1599px;top:259px"></div>
<div class="ch" style="left:1632px;top:255px"></div>
<div class="ar" style="left:1654px;top:259px"></div>
<div class="ch" style="left:1687px;top:255px"></div>
<div class="ar" style="left:1709px;top:259px"></div>
<div class="ch" style="left:1742px;top:255px"></div>
<div class="ar" style="left:1764px;top:259px"></div>
<div class="ch" style="left:1797px;top:255px"></div>
<div class="ar" style="left:1819px;top:259px"></div>
<div class="ch" style="left:1852px;top:255px"></div>
<div class="ar" style="left:1874px;top:259px"></div>
<div class="ch" style="left:202px;top:276px"></div>
<div class="ar" style="left:224px;top:280px"></div>
<div class="ch" style="left:257px;top:276px"></div>
<div class="ar" style="left:279px;top:280px"></div>
<div class="ch" style="left:312px;top:276px"></div>
<div class="ar" style="left:334px;top:280px"></div>
<div class="ch" style="left:367px;top:276px"></div>
<div class="ar" style="left:389px;top:280px"></div>
<div class="ch" style="left:422px;top:276px"></div>
<div class="ar" style="left:444px;top:280px"></div>
<div class="ch" style="left:477px;top:276px;background:#bfe1f6"></div>
<div class="ar" style="left:499px;top:280px"></div>
<div class="cl" style="left:485px;top:276px">P</div>
<div class="ch" style="left:532px;top:276px;background:#bfe1f6"></div>
<div class="ar" style="left:554px;top:280px"></div>
<div class="cl" style="left:540px;top:276px">P</div>
<div class="ch" style="left:587px;top:276px"></div>
<div class="ar" style="left:609px;top:280px"></div>
<div class="ch" style="left:642px;top:276px"></div>
<div class="ar" style="left:664px;top:280px"></div>
<div class="ch" style="left:697px;top:276px"></div>
<div class="ar" style="left:719px;top:280px"></div>
<div class="ch" style="left:752px;top:276px"></div>
<div class="ar" style="left:774px;top:280px"></div>
<div class="ch" style="left:807px;top:276px"></div>
<div class="ar" style="left:829px;top:280px"></div>
<div class="ch" style="left:862px;top:276px"></div>
<div class="ar" style="left:884px;top:280px"></div>
<div class="ch" style="left:917px;top:276px"></div>
<div class="ar" style="left:939px;top:280px"></div>
<div class="ch" style="left:972px;top:276px"></div>
<div class="ar" style="left:994px;top:280px"></div>
<div class="ch" style="left:1027px;top:276px"></div>
<div class="ar" style="left:1049px;top:280px"></div>
<div class="ch" style="left:1082px;top:276px"></div>
<div class="ar" style="left:1104px;top:280px"></div>
<div class="ch" style="left:1137px;top:276px"></div>
<div class="ar" style="left:1159px;top:280px"></div>
<div class="ch" style="left:1192px;top:276px"></div>
<div class="ar" style="left:1214px;top:280px"></div>
<div class="ch" style="left:1247px;top:276px"></div>
<div class="ar" style="left:1269px;top:280px"></div>
<div class="ch" style="left:1302px;top:276px"></div>
<div class="ar" style="left:1324px;top:280px"></div>
<div class="ch" style="left:1357px;top:276px"></div>
<div class="ar" style="left:1379px;top:280px"></div>
<div class="ch" style="left:1412px;top:276px"></div>
<div class="ar" style="left:1434px;top:280px"></div>
<div class="ch" style="left:1467px;top:276px"></div>
<div class="ar" style="left:1489px;top:280px"></div>
<div class="ch" style="left:1522px;top:276px"></div>
<div class="ar" style="left:1544px;top:280px"></div>
<div class="ch" style="left:1577px;top:276px"></div>
<div class="ar" style="left:1599px;top:280px"></div>
<div class="ch" style="left:1632px;top:276px"></div>
<div class="ar" style="left:1654px;top:280px"></div>
<div class="ch" style="left:1687px;top:276px"></div>
<div class="ar" style="left:1709px;top:280px"></div>
<div class="ch" style="left:1742px;top:276px"></div>
<div class="ar" style="left:1764px;top:280px"></div>
<div class="ch" style="left:1797px;top:276px"></div>
<div class="ar" style="left:1819px;top:280px"></div>
<div class="ch" style="left:1852px;top:276px"></div>
<div class="ar" style="left:1874px;top:280px"></div>
<div class="ch" style="left:202px;top:297px"></div>
<div class="ar" style="left:224px;top:301px"></div>
<div class="ch" style="left:257px;top:297px"></div>
<div class="ar" style="left:279px;top:301px"></div>
<div class="ch" style="left:312px;top:297px"></div>
<div class="ar" style="left:334px;top:301px"></div>
<div class="ch" style="left:367px;top:297px"></div>
<div class="ar" style="left:389px;top:301px"></div>
<div class="ch" style="left:422px;top:297px"></div>
<div class="ar" style="left:444px;top:301px"></div>
<div class="ch" style="left:477px;top:297px"></div>
<div class="ar" style="left:499px;top:301px"></div>
<div class="ch" style="left:532px;top:297px"></div>
<div class="ar" style="left:554px;top:301px"></div>
<div class="ch" style="left:587px;top:297px"></div>
<div class="ar" style="left:609px;top:301px"></div>
<div class="ch" style="left:642px;top:297px"></div>
<div class="ar" style="left:664px;top:301px"></div>
<div class="ch" style="left:697px;top:297px"></div>
<div class="ar" style="left:719px;top:301px"></div>
<div class="ch" style="left:752px;top:297px"></div>
<div class="ar" style="left:774px;top:301px"></div>
<div class="ch" style="left:807px;top:297px"></div>
<div class="ar" style="left:829px;top:301px"></div>
<div class="ch" style="left:862px;top:297px"></div>
<div class="ar" style="left:884px;top:301px"></div>
<div class="ch" style="left:917px;top:297px"></div>
<div class="ar" style="left:939px;top:301px"></div>
<div class="ch" style="left:972px;top:297px"></div>
<div class="ar" style="left:994px;top:301px"></div>
<div class="ch" style="left:1027px;top:297px"></div>
<div class="ar" style="left:1049px;top:301px"></div>
<div class="ch" style="left:1082px;top:297px"></div>
<div class="ar" style="left:1104px;top:301px"></div>
<div class="ch" style="left:1137px;top:297px"></div>
<div class="ar" style="left:1159px;top:301px"></div>
<div class="ch" style="left:1192px;top:297px"></div>
<div class="ar" style="left:1214px;top:301px"></div>
<div class="ch" style="left:1247px;top:297px"></div>
<div class="ar" style="left:1269px;top:301px"></div>
<div class="ch" style="left:1302px;top:297px"></div>
<div class="ar" style="left:1324px;top:301px"></div>
<div class="ch" style="left:1357px;top:297px"></div>
<div class="ar" style="left:1379px;top:301px"></div>
<div class="ch" style="left:1412px;top:297px"></div>
<div class="ar" style="left:1434px;top:301px"></div>
<div class="ch" style="left:1467px;top:297px"></div>
<div class="ar" style="left:1489px;top:301px"></div>
<div class="ch" style="left:1522px;top:297px"></div>
<div class="ar" style="left:1544px;top:301px"></div>
<div class="ch" style="left:1577px;top:297px"></div>
<div class="ar" style="left:1599px;top:301px"></div>
<div class="ch" style="left:1632px;top:297px"></div>
<div class="ar" style="left:1654px;top:301px"></div>
<div class="ch" style="left:1687px;top:297px"></div>
<div class="ar" style="left:1709px;top:301px"></div>
<div class="ch" style="left:1742px;top:297px"></div>
<div class="ar" style="left:1764px;top:301px"></div>
<div class="ch" style="left:1797px;top:297px"></div>
<div class="ar" style="left:1819px;top:301px"></div>
<div class="ch" style="left:1852px;top:297px"></div>
<div class="ar" style="left:1874px;top:301px"></div>
<div class="ch" style="left:202px;top:318px"></div>
<div class="ar" style="left:224px;top:322px"></div>
<div class="ch" style="left:257px;top:318px"></div>
<div class="ar" style="left:279px;top:322px"></div>
<div class="ch" style="left:312px;top:318px"></div>
<div class="ar" style="left:334px;top:322px"></div>
<div class="ch" style="left:367px;top:318px"></div>
<div class="ar" style="left:389px;top:322px"></div>
<div class="ch" style="left:422px;top:318px"></div>
<div class="ar" style="left:444px;top:322px"></div>
<div class="ch" style="left:477px;top:318px"></div>
<div class="ar" style="left:499px;top:322px"></div>
<div class="ch" style="left:532px;top:318px"></div>
<div class="ar" style="left:554px;top:322px"></div>
<div class="ch" style="left:587px;top:318px"></div>
<div class="ar" style="left:609px;top:322px"></div>
<div class="ch" style="left:642px;top:318px"></div>
<div class="ar" style="left:664px;top:322px"></div>
<div class="ch" style="left:697px;top:318px"></div>
<div class="ar" style="left:719px;top:322px"></div>
<div class="ch" style="left:752px;top:318px"></div>
<div class="ar" style="left:774px;top:322px"></div>
<div class="ch" style="left:807px;top:318px"></div>
<div class="ar" style="left:829px;top:322px"></div>
<div class="ch" style="left:862px;top:318px"></div>
<div class="ar" style="left:884px;top:322px"></div>
<div class="ch" style="left:917px;top:318px"></div>
<div class="ar" style="left:939px;top:322px"></div>
<div class="ch" style="left:972px;top:318px"></div>
<div class="ar" style="left:994px;top:322px"></div>
<div class="ch" style="left:1027px;top:318px"></div>
<div class="ar" style="left:1049px;top:322px"></div>
<div class="ch" style="left:1082px;top:318px"></div>
<div class="ar" style="left:1104px;top:322px"></div>
<div class="ch" style="left:1137px;top:318px"></div>
<div class="ar" style="left:1159px;top:322px"></div>
<div class="ch" style="left:1192px;top:318px"></div>
<div class="ar" style="left:1214px;top:322px"></div>
<div class="ch" style="left:1247px;top:318px"></div>
<div class="ar" style="left:1269px;top:322px"></div>
<div class="ch" style="left:1302px;top:318px"></div>
<div class="ar" style="left:1324px;top:322px"></div>
<div class="ch" style="left:1357px;top:318px"></div>
<div class="ar" style="left:1379px;top:322px"></div>
<div class="ch" style="left:1412px;top:318px"></div>
<div class="ar" style="left:1434px;top:322px"></div>
<div class="ch" style="left:1467px;top:318px"></div>
<div class="ar" style="left:1489px;top:322px"></div>
<div class="ch" style="left:1522px;top:318px"></div>
<div class="ar" style="left:1544px;top:322px"></div>
<div class="ch" style="left:1577px;top:318px"></div>
<div class="ar" style="left:1599px;top:322px"></div>
<div class="ch" style="left:1632px;top:318px"></div>
<div class="ar" style="left:1654px;top:322px"></div>
<div class="ch" style="left:1687px;top:318px"></div>
<div class="ar" style="left:1709px;top:322px"></div>
<div class="ch" style="left:1742px;top:318px"></div>
<div class="ar" style="left:1764px;top:322px"></div>
<div class="ch" style="left:1797px;top:318px"></div>
<div class="ar" style="left:1819px;top:322px"></div>
<div class="ch" style="left:1852px;top:318px"></div>
<div class="ar" style="left:1874px;top:322px"></div>
<div class="ch" style="left:202px;top:339px"></div>
<div class="ar" style="left:224px;top:343px"></div>
<div class="ch" style="left:257px;top:339px"></div>
<div class="ar" style="left:279px;top:343px"></div>
<div class="ch" style="left:312px;top:339px"></div>
<div class="ar" style="left:334px;top:343px"></div>
<div class="ch" style="left:367px;top:339px"></div>
<div class="ar" style="left:389px;top:343px"></div>
<div class="ch" style="left:422px;top:339px"></div>
<div class="ar" style="left:444px;top:343px"></div>
<div class="ch" style="left:477px;top:339px"></div>
<div class="ar" style="left:499px;top:343px"></div>
<div class="ch" style="left:532px;top:339px"></div>
<div class="ar" style="left:554px;top:343px"></div>
<div class="ch" style="left:587px;top:339px"></div>
<div class="ar" style="left:609px;top:343px"></div>
<div class="ch" style="left:642px;top:339px"></div>
<div class="ar" style="left:664px;top:343px"></div>
<div class="ch" style="left:697px;top:339px"></div>
<div class="ar" style="left:719px;top:343px"></div>
<div class="ch" style="left:752px;top:339px"></div>
<div class="ar" style="left:774px;top:343px"></div>
<div class="ch" style="left:807px;top:339px"></div>
<div class="ar" style="left:829px;top:343px"></div>
<div class="ch" style="left:862px;top:339px"></div>
<div class="ar" style="left:884px;top:343px"></div>
<div class="ch" style="left:917px;top:339px"></div>
<div class="ar" style="left:939px;top:343px"></div>
<div class="ch" style="left:972px;top:339px"></div>
<div class="ar" style="left:994px;top:343px"></div>
<div class="ch" style="left:1027px;top:339px"></div>
<div class="ar" style="left:1049px;top:343px"></div>
<div class="ch" style="left:1082px;top:339px;background:#bfe1f6"></div>
<div class="ar" style="left:1104px;top:343px"></div>
<div class="cl" style="left:1090px;top:339px">P</div>
<div class="ch" style="left:1137px;top:339px"></div>
<div class="ar" style="left:1159px;top:343px"></div>
<div class="ch" style="left:1192px;top:339px"></div>
<div class="ar" style="left:1214px;top:343px"></div>
<div class="ch" style="left:1247px;top:339px"></div>
<div class="ar" style="left:1269px;top:343px"></div>
<div class="ch" style="left:1302px;top:339px"></div>
<div class="ar" style="left:1324px;top:343px"></div>
<div class="ch" style="left:1357px;top:339px"></div>
<div class="ar" style="left:1379px;top:343px"></div>
<div class="ch" style="left:1412px;top:339px"></div>
<div class="ar" style="left:1434px;top:343px"></div>
<div class="ch" style="left:1467px;top:339px"></div>
<div class="ar" style="left:1489px;top:343px"></div>
<div class="ch" style="left:1522px;top:339px"></div>
<div class="ar" style="left:1544px;top:343px"></div>
<div class="ch" style="left:1577px;top:339px"></div>
<div class="ar" style="left:1599px;top:343px"></div>
<div class="ch" style="left:1632px;top:339px"></div>
<div class="ar" style="left:1654px;top:343px"></div>
<div class="ch" style="left:1687px;top:339px"></div>
<div class="ar" style="left:1709px;top:343px"></div>
<div class="ch" style="left:1742px;top:339px"></div>
<div class="ar" style="left:1764px;top:343px"></div>
<div class="ch" style="left:1797px;top:339px"></div>
<div class="ar" style="left:1819px;top:343px"></div>
<div class="ch" style="left:1852px;top:339px"></div>
<div class="ar" style="left:1874px;top:343px"></div>
<div class="ch" style="left:202px;top:360px"></div>
<div class="ar" style="left:224px;top:364px"></div>
<div class="ch" style="left:257px;top:360px"></div>
<div class="ar" style="left:279px;top:364px"></div>
<div class="ch" style="left:312px;top:360px"></div>
<div class="ar" style="left:334px;top:364px"></div>
<div class="ch" style="left:367px;top:360px"></div>
<div class="ar" style="left:389px;top:364px"></div>
<div class="ch" style="left:422px;top:360px"></div>
<div class="ar" style="left:444px;top:364px"></div>
<div class="ch" style="left:477px;top:360px"></div>
<div class="ar" style="left:499px;top:364px"></div>
<div class="ch" style="left:532px;top:360px"></div>
<div class="ar" style="left:554px;top:364px"></div>
<div class="ch" style="left:587px;top:360px"></div>
<div class="ar" style="left:609px;top:364px"></div>
<div class="ch" style="left:642px;top:360px"></div>
<div class="ar" style="left:664px;top:364px"></div>
<div class="ch" style="left:697px;top:360px"></div>
<div class="ar" style="left:719px;top:364px"></div>
<div class="ch" style="left:752px;top:360px"></div>
<div class="ar" style="left:774px;top:364px"></div>
<div class="ch" style="left:807px;top:360px"></div>
<div class="ar" style="left:829px;top:364px"></div>
<div class="ch" style="left:862px;top:360px"></div>
<div class="ar" style="left:884px;top:364px"></div>
<div class="ch" style="left:917px;top:360px"></div>
<div class="ar" style="left:939px;top:364px"></div>
<div class="ch" style="left:972px;top:360px"></div>
<div class="ar" style="left:994px;top:364px"></div>
<div class="ch" style="left:1027px;top:360px"></div>
<div class="ar" style="left:1049px;top:364px"></div>
<div class="ch" style="left:1082px;top:360px"></div>
<div class="ar" style="left:1104px;top:364px"></div>
<div class="ch" style="left:1137px;top:360px"></div>
<div class="ar" style="left:1159px;top:364px"></div>
<div class="ch" style="left:1192px;top:360px"></div>
<div class="ar" style="left:1214px;top:364px"></div>
<div class="ch" style="left:1247px;top:360px"></div>
<div class="ar" style="left:1269px;top:364px"></div>
<div class="ch" style="left:1302px;top:360px"></div>
<div class="ar" style="left:1324px;top:364px"></div>
<div class="ch" style="left:1357px;top:360px"></div>
<div class="ar" style="left:1379px;top:364px"></div>
<div class="ch" style="left:1412px;top:360px"></div>
<div class="ar" style="left:1434px;top:364px"></div>
<div class="ch" style="left:1467px;top:360px"></div>
<div class="ar" style="left:1489px;top:364px"></div>
<div class="ch" style="left:1522px;top:360px"></div>
<div class="ar" style="left:1544px;top:364px"></div>
<div class="ch" style="left:1577px;top:360px"></div>
<div class="ar" style="left:1599px;top:364px"></div>
<div class="ch" style="left:1632px;top:360px"></div>
<div class="ar" style="left:1654px;top:364px"></div>
<div class="ch" style="left:1687px;top:360px"></div>
<div class="ar" style="left:1709px;top:364px"></div>
<div class="ch" style="left:1742px;top:360px"></div>
<div class="ar" style="left:1764px;top:364px"></div>
<div class="ch" style="left:1797px;top:360px"></div>
<div class="ar" style="left:1819px;top:364px"></div>
<div class="ch" style="left:1852px;top:360px"></div>
<div class="ar" style="left:1874px;top:364px"></div>
<div class="ch" style="left:202px;top:381px"></div>
<div class="ar" style="left:224px;top:385px"></div>
<div class="ch" style="left:257px;top:381px"></div>
<div class="ar" style="left:279px;top:385px"></div>
<div class="ch" style="left:312px;top:381px"></div>
<div class="ar" style="left:334px;top:385px"></div>
<div class="ch" style="left:367px;top:381px"></div>
<div class="ar" style="left:389px;top:385px"></div>
<div class="ch" style="left:422px;top:381px"></div>
<div class="ar" style="left:444px;top:385px"></div>
<div class="ch" style="left:477px;top:381px"></div>
<div class="ar" style="left:499px;top:385px"></div>
<div class="ch" style="left:532px;top:381px"></div>
<div class="ar" style="left:554px;top:385px"></div>
<div class="ch" style="left:587px;top:381px"></div>
<div class="ar" style="left:609px;top:385px"></div>
<div class="ch" style="left:642px;top:381px"></div>
<div class="ar" style="left:664px;top:385px"></div>
<div class="ch" style="left:697px;top:381px"></div>
<div class="ar" style="left:719px;top:385px"></div>
<div class="ch" style="left:752px;top:381px"></div>
<div class="ar" style="left:774px;top:385px"></div>
<div class="ch" style="left:807px;top:381px"></div>
<div class="ar" style="left:829px;top:385px"></div>
<div class="ch" style="left:862px;top:381px"></div>
<div class="ar" style="left:884px;top:385px"></div>
<div class="ch" style="left:917px;top:381px"></div>
<div class="ar" style="left:939px;top:385px"></div>
<div class="ch" style="left:972px;top:381px"></div>
<div class="ar" style="left:994px;top:385px"></div>
<div class="ch" style="left:1027px;top:381px"></div>
<div class="ar" style="left:1049px;top:385px"></div>
<div class="ch" style="left:1082px;top:381px;background:#bfe1f6"></div>
<div class="ar" style="left:1104px;top:385px"></div>
<div class="cl" style="left:1090px;top:381px">P</div>
<div class="ch" style="left:1137px;top:381px;background:#bfe1f6"></div>
<div class="ar" style="left:1159px;top:385px"></div>
<div class="cl" style="left:1145px;top:381px">P</div>
<div class="ch" style="left:1192px;top:381px"></div>
<div class="ar" style="left:1214px;top:385px"></div>
<div class="ch" style="left:1247px;top:381px"></div>
<div class="ar" style="left:1269px;top:385px"></div>
<div class="ch" style="left:1302px;top:381px"></div>
<div class="ar" style="left:1324px;top:385px"></div>
<div class="ch" style="left:1357px;top:381px"></div>
<div class="ar" style="left:1379px;top:385px"></div>
<div class="ch" style="left:1412px;top:381px"></div>
<div class="ar" style="left:1434px;top:385px"></div>
<div class="ch" style="left:1467px;top:381px"></div>
<div class="ar" style="left:1489px;top:385px"></div>
<div class="ch" style="left:1522px;top:381px"></div>
<div class="ar" style="left:1544px;top:385px"></div>
<div class="ch" style="left:1577px;top:381px"></div>
<div class="ar" style="left:1599px;top:385px"></div>
<div class="ch" style="left:1632px;top:381px"></div>
<div class="ar" style="left:1654px;top:385px"></div>
<div class="ch" style="left:1687px;top:381px"></div>
<div class="ar" style="left:1709px;top:385px"></div>
<div class="ch" style="left:1742px;top:381px"></div>
<div class="ar" style="left:1764px;top:385px"></div>
<div class="ch" style="left:1797px;top:381px"></div>
<div class="ar" style="left:1819px;top:385px"></div>
<div class="ch" style="left:1852px;top:381px"></div>
<div class="ar" style="left:1874px;top:385px"></div>
<div class="ch" style="left:202px;top:402px"></div>
<div class="ar" style="left:224px;top:406px"></div>
<div class="ch" style="left:257px;top:402px"></div>
<div class="ar" style="left:279px;top:406px"></div>
<div class="ch" style="left:312px;top:402px"></div>
<div class="ar" style="left:334px;top:406px"></div>
<div class="ch" style="left:367px;top:402px"></div>
<div class="ar" style="left:389px;top:406px"></div>
<div class="ch" style="left:422px;top:402px"></div>
<div class="ar" style="left:444px;top:406px"></div>
<div class="ch" style="left:477px;top:402px"></div>
<div class="ar" style="left:499px;top:406px"></div>
<div class="ch" style="left:532px;top:402px"></div>
<div class="ar" style="left:554px;top:406px"></div>
<div class="ch" style="left:587px;top:402px"></div>
<div class="ar" style="left:609px;top:406px"></div>
<div class="ch" style="left:642px;top:402px"></div>
<div class="ar" style="left:664px;top:406px"></div>
<div class="ch" style="left:697px;top:402px"></div>
<div class="ar" style="left:719px;top:406px"></div>
<div class="ch" style="left:752px;top:402px"></div>
<div class="ar" style="left:774px;top:406px"></div>
<div class="ch" style="left:807px;top:402px"></div>
<div class="ar" style="left:829px;top:406px"></div>
<div class="ch" style="left:862px;top:402px"></div>
<div class="ar" style="left:884px;top:406px"></div>
<div class="ch" style="left:917px;top:402px"></div>
<div class="ar" style="left:939px;top:406px"></div>
<div class="ch" style="left:972px;top:402px"></div>
<div class="ar" style="left:994px;top:406px"></div>
<div class="ch" style="left:1027px;top:402px"></div>
<div class="ar" style="left:1049px;top:406px"></div>
<div class="ch" style="left:1082px;top:402px"></div>
<div class="ar" style="left:1104px;top:406px"></div>
<div class="ch" style="left:1137px;top:402px"></div>
<div class="ar" style="left:1159px;top:406px"></div>
<div class="ch" style="left:1192px;top:402px"></div>
<div class="ar" style="left:1214px;top:406px"></div>
<div class="ch" style="left:1247px;top:402px"></div>
<div class="ar" style="left:1269px;top:406px"></div>
<div class="ch" style="left:1302px;top:402px"></div>
<div class="ar" style="left:1324px;top:406px"></div>
<div class="ch" style="left:1357px;top:402px"></div>
<div class="ar" style="left:1379px;top:406px"></div>
<div class="ch" style="left:1412px;top:402px"></div>
<div class="ar" style="left:1434px;top:406px"></div>
<div class="ch" style="left:1467px;top:402px"></div>
<div class="ar" style="left:1489px;top:406px"></div>
<div class="ch" style="left:1522px;top:402px"></div>
<div class="ar" style="left:1544px;top:406px"></div>
<div class="ch" style="left:1577px;top:402px"></div>
<div class="ar" style="left:1599px;top:406px"></div>
<div class="ch" style="left:1632px;top:402px"></div>
<div class="ar" style="left:1654px;top:406px"></div>
<div class="ch" style="left:1687px;top:402px"></div>
<div class="ar" style="left:1709px;top:406px"></div>
<div class="ch" style="left:1742px;top:402px"></div>
<div class="ar" style="left:1764px;top:406px"></div>
<div class="ch" style="left:1797px;top:402px"></div>
<div class="ar" style="left:1819px;top:406px"></div>
<div class="ch" style="left:1852px;top:402px"></div>
<div class="ar" style="left:1874px;top:406px"></div>
<div class="ch" style="left:202px;top:423px"></div>
<div class="ar" style="left:224px;top:427px"></div>
<div class="ch" style="left:257px;top:423px"></div>
<div class="ar" style="left:279px;top:427px"></div>
<div class="ch" style="left:312px;top:423px"></div>
<div class="ar" style="left:334px;top:427px"></div>
<div class="ch" style="left:367px;top:423px"></div>
<div class="ar" style="left:389px;top:427px"></div>
<div class="ch" style="left:422px;top:423px"></div>
<div class="ar" style="left:444px;top:427px"></div>
<div class="ch" style="left:477px;top:423px"></div>
<div class="ar" style="left:499px;top:427px"></div>
<div class="ch" style="left:532px;top:423px"></div>
<div class="ar" style="left:554px;top:427px"></div>
<div class="ch" style="left:587px;top:423px"></div>
<div class="ar" style="left:609px;top:427px"></div>
<div class="ch" style="left:642px;top:423px"></div>
<div class="ar" style="left:664px;top:427px"></div>
<div class="ch" style="left:697px;top:423px"></div>
<div class="ar" style="left:719px;top:427px"></div>
<div class="ch" style="left:752px;top:423px"></div>
<div class="ar" style="left:774px;top:427px"></div>
<div class="ch" style="left:807px;top:423px"></div>
<div class="ar" style="left:829px;top:427px"></div>
<div class="ch" style="left:862px;top:423px"></div>
<div class="ar" style="left:884px;top:427px"></div>
<div class="ch" style="left:917px;top:423px"></div>
<div class="ar" style="left:939px;top:427px"></div>
<div class="ch" style="left:972px;top:423px"></div>
<div class="ar" style="left:994px;top:427px"></div>
<div class="ch" style="left:1027px;top:423px"></div>
<div class="ar" style="left:1049px;top:427px"></div>
<div class="ch" style="left:1082px;top:423px"></div>
<div class="ar" style="left:1104px;top:427px"></div>
<div class="ch" style="left:1137px;top:423px"></div>
<div class="ar" style="left:1159px;top:427px"></div>
<div class="ch" style="left:1192px;top:423px"></div>
<div class="ar" style="left:1214px;top:427px"></div>
<div class="ch" style="left:1247px;top:423px"></div>
<div class="ar" style="left:1269px;top:427px"></div>
<div class="ch" style="left:1302px;top:423px"></div>
<div class="ar" style="left:1324px;top:427px"></div>
<div class="ch" style="left:1357px;top:423px"></div>
<div class="ar" style="left:1379px;top:427px"></div>
<div class="ch" style="left:1412px;top:423px"></div>
<div class="ar" style="left:1434px;top:427px"></div>
<div class="ch" style="left:1467px;top:423px"></div>
<div class="ar" style="left:1489px;top:427px"></div>
<div class="ch" style="left:1522px;top:423px"></div>
<div class="ar" style="left:1544px;top:427px"></div>
<div class="ch" style="left:1577px;top:423px"></div>
<div class="ar" style="left:1599px;top:427px"></div>
<div class="ch" style="left:1632px;top:423px"></div>
<div class="ar" style="left:1654px;top:427px"></div>
<div class="ch" style="left:1687px;top:423px"></div>
<div class="ar" style="left:1709px;top:427px"></div>
<div class="ch" style="left:1742px;top:423px"></div>
<div class="ar" style="left:1764px;top:427px"></div>
<div class="ch" style="left:1797px;top:423px"></div>
<div class="ar" style="left:1819px;top:427px"></div>
<div class="ch" style="left:1852px;top:423px"></div>
<div class="ar" style="left:1874px;top:427px"></div>
<div class="ch" style="left:202px;top:444px"></div>
<div class="ar" style="left:224px;top:448px"></div>
<div class="ch" style="left:257px;top:444px"></div>
<div class="ar" style="left:279px;top:448px"></div>
<div class="ch" style="left:312px;top:444px"></div>
<div class="ar" style="left:334px;top:448px"></div>
<div class="ch" style="left:367px;top:444px"></div>
<div class="ar" style="left:389px;top:448px"></div>
<div class="ch" style="left:422px;top:444px"></div>
<div class="ar" style="left:444px;top:448px"></div>
<div class="ch" style="left:477px;top:444px"></div>
<div class="ar" style="left:499px;top:448px"></div>
<div class="ch" style="left:532px;top:444px"></div>
<div class="ar" style="left:554px;top:448px"></div>
<div class="ch" style="left:587px;top:444px"></div>
<div class="ar" style="left:609px;top:448px"></div>
<div class="ch" style="left:642px;top:444px"></div>
<div class="ar" style="left:664px;top:448px"></div>
<div class="ch" style="left:697px;top:444px"></div>
<div class="ar" style="left:719px;top:448px"></div>
<div class="ch" style="left:752px;top:444px"></div>
<div class="ar" style="left:774px;top:448px"></div>
<div class="ch" style="left:807px;top:444px"></div>
<div class="ar" style="left:829px;top:448px"></div>
<div class="ch" style="left:862px;top:444px;background:#ffe5a0"></div>
<div class="ar" style="left:884px;top:448px"></div>
<div class="cl" style="left:870px;top:444px">B</div>
<div class="ch" style="left:917px;top:444px;background:#bfe1f6"></div>
<div class="ar" style="left:939px;top:448px"></div>
<div class="cl" style="left:925px;top:444px">P</div>
<div class="ch" style="left:972px;top:444px"></div>
<div class="ar" style="left:994px;top:448px"></div>
<div class="ch" style="left:1027px;top:444px"></div>
<div class="ar" style="left:1049px;top:448px"></div>
<div class="ch" style="left:1082px;top:444px"></div>
<div class="ar" style="left:1104px;top:448px"></div>
<div class="ch" style="left:1137px;top:444px"></div>
<div class="ar" style="left:1159px;top:448px"></div>
<div class="ch" style="left:1192px;top:444px"></div>
<div class="ar" style="left:1214px;top:448px"></div>
<div class="ch" style="left:1247px;top:444px"></div>
<div class="ar" style="left:1269px;top:448px"></div>
<div class="ch" style="left:1302px;top:444px"></div>
<div class="ar" style="left:1324px;top:448px"></div>
<div class="ch" style="left:1357px;top:444px"></div>
<div class="ar" style="left:1379px;top:448px"></div>
<div class="ch" style="left:1412px;top:444px"></div>
<div class="ar" style="left:1434px;top:448px"></div>
<div class="ch" style="left:1467px;top:444px"></div>
<div class="ar" style="left:1489px;top:448px"></div>
<div class="ch" style="left:1522px;top:444px"></div>
<div class="ar" style="left:1544px;top:448px"></div>
<div class="ch" style="left:1577px;top:444px"></div>
<div class="ar" style="left:1599px;top:448px"></div>
<div class="ch" style="left:1632px;top:444px"></div>
<div class="ar" style="left:1654px;top:448px"></div>
<div class="ch" style="left:1687px;top:444px"></div>
<div class="ar" style="left:1709px;top:448px"></div>
<div class="ch" style="left:1742px;top:444px"></div>
<div class="ar" style="left:1764px;top:448px"></div>
<div class="ch" style="left:1797px;top:444px"></div>
<div class="ar" style="left:1819px;top:448px"></div>
<div class="ch" style="left:1852px;top:444px"></div>
<div class="ar" style="left:1874px;top:448px"></div>
<div class="ch" style="left:202px;top:465px"></div>
<div class="ar" style="left:224px;top:469px"></div>
<div class="ch" style="left:257px;top:465px"></div>
<div class="ar" style="left:279px;top:469px"></div>
<div class="ch" style="left:312px;top:465px"></div>
<div class="ar" style="left:334px;top:469px"></div>
<div class="ch" style="left:367px;top:465px"></div>
<div class="ar" style="left:389px;top:469px"></div>
<div class="ch" style="left:422px;top:465px"></div>
<div class="ar" style="left:444px;top:469px"></div>
<div class="ch" style="left:477px;top:465px"></div>
<div class="ar" style="left:499px;top:469px"></div>
<div class="ch" style="left:532px;top:465px"></div>
<div class="ar" style="left:554px;top:469px"></div>
<div class="ch" style="left:587px;top:465px"></div>
<div class="ar" style="left:609px;top:469px"></div>
<div class="ch" style="left:642px;top:465px"></div>
<div class="ar" style="left:664px;top:469px"></div>
<div class="ch" style="left:697px;top:465px"></div>
<div class="ar" style="left:719px;top:469px"></div>
<div class="ch" style="left:752px;top:465px"></div>
<div class="ar" style="left:774px;top:469px"></div>
<div class="ch" style="left:807px;top:465px"></div>
<div class="ar" style="left:829px;top:469px"></div>
<div class="ch" style="left:862px;top:465px"></div>
<div class="ar" style="left:884px;top:469px"></div>
<div class="ch" style="left:917px;top:465px"></div>
<div class="ar" style="left:939px;top:469px"></div>
<div class="ch" style="left:972px;top:465px"></div>
<div class="ar" style="left:994px;top:469px"></div>
<div class="ch" style="left:1027px;top:465px"></div>
<div class="ar" style="left:1049px;top:469px"></div>
<div class="ch" style="left:1082px;top:465px"></div>
<div class="ar" style="left:1104px;top:469px"></div>
<div class="ch" style="left:1137px;top:465px"></div>
<div class="ar" style="left:1159px;top:469px"></div>
<div class="ch" style="left:1192px;top:465px"></div>
<div class="ar" style="left:1214px;top:469px"></div>
<div class="ch" style="left:1247px;top:465px"></div>
<div class="ar" style="left:1269px;top:469px"></div>
<div class="ch" style="left:1302px;top:465px"></div>
<div class="ar" style="left:1324px;top:469px"></div>
<div class="ch" style="left:1357px;top:465px"></div>
<div class="ar" style="left:1379px;top:469px"></div>
<div class="ch" style="left:1412px;top:465px"></div>
<div class="ar" style="left:1434px;top:469px"></div>
<div class="ch" style="left:1467px;top:465px"></div>
<div class="ar" style="left:1489px;top:469px"></div>
<div class="ch" style="left:1522px;top:465px"></div>
<div class="ar" style="left:1544px;top:469px"></div>
<div class="ch" style="left:1577px;top:465px"></div>
<div class="ar" style="left:1599px;top:469px"></div>
<div class="ch" style="left:1632px;top:465px"></div>
<div class="ar" style="left:1654px;top:469px"></div>
<div class="ch" style="left:1687px;top:465px"></div>
<div class="ar" style="left:1709px;top:469px"></div>
<div class="ch" style="left:1742px;top:465px"></div>
<div class="ar" style="left:1764px;top:469px"></div>
<div class="ch" style="left:1797px;top:465px"></div>
<div class="ar" style="left:1819px;top:469px"></div>
<div class="ch" style="left:1852px;top:465px"></div>
<div class="ar" style="left:1874px;top:469px"></div>
<div class="ch" style="left:202px;top:486px"></div>
<div class="ar" style="left:224px;top:490px"></div>
<div class="ch" style="left:257px;top:486px"></div>
<div class="ar" style="left:279px;top:490px"></div>
<div class="ch" style="left:312px;top:486px;background:#ffe5a0"></div>
<div class="ar" style="left:334px;top:490px"></div>
<div class="cl" style="left:320px;top:486px">B</div>
<div class="ch" style="left:367px;top:486px;background:#bfe1f6"></div>
<div class="ar" style="left:389px;top:490px"></div>
<div class="cl" style="left:375px;top:486px">P</div>
<div class="ch" style="left:422px;top:486px"></div>
<div class="ar" style="left:444px;top:490px"></div>
<div class="ch" style="left:477px;top:486px"></div>
<div class="ar" style="left:499px;top:490px"></div>
<div class="ch" style="left:532px;top:486px"></div>
<div class="ar" style="left:554px;top:490px"></div>
<div class="ch" style="left:587px;top:486px"></div>
<div class="ar" style="left:609px;top:490px"></div>
<div class="ch" style="left:642px;top:486px"></div>
<div class="ar" style="left:664px;top:490px"></div>
<div class="ch" style="left:697px;top:486px"></div>
<div class="ar" style="left:719px;top:490px"></div>
<div class="ch" style="left:752px;top:486px"></div>
<div class="ar" style="left:774px;top:490px"></div>
<div class="ch" style="left:807px;top:486px"></div>
<div class="ar" style="left:829px;top:490px"></div>
<div class="ch" style="left:862px;top:486px"></div>
<div class="ar" style="left:884px;top:490px"></div>
<div class="ch" style="left:917px;top:486px"></div>
<div class="ar" style="left:939px;top:490px"></div>
<div class="ch" style="left:972px;top:486px"></div>
<div class="ar" style="left:994px;top:490px"></div>
<div class="ch" style="left:1027px;top:486px"></div>
<div class="ar" style="left:1049px;top:490px"></div>
<div class="ch" style="left:1082px;top:486px"></div>
<div class="ar" style="left:1104px;top:490px"></div>
<div class="ch" style="left:1137px;top:486px"></div>
<div class="ar" style="left:1159px;top:490px"></div>
<div class="ch" style="left:1192px;top:486px"></div>
<div class="ar" style="left:1214px;top:490px"></div>
<div class="ch" style="left:1247px;top:486px"></div>
<div class="ar" style="left:1269px;top:490px"></div>
<div class="ch" style="left:1302px;top:486px"></div>
<div class="ar" style="left:1324px;top:490px"></div>
<div class="ch" style="left:1357px;top:486px"></div>
<div class="ar" style="left:1379px;top:490px"></div>
<div class="ch" style="left:1412px;top:486px"></div>
<div class="ar" style="left:1434px;top:490px"></div>
<div class="ch" style="left:1467px;top:486px"></div>
<div class="ar" style="left:1489px;top:490px"></div>
<div class="ch" style="left:1522px;top:486px"></div>
<div class="ar" style="left:1544px;top:490px"></div>
<div class="ch" style="left:1577px;top:486px"></div>
<div class="ar" style="left:1599px;top:490px"></div>
<div class="ch" style="left:1632px;top:486px"></div>
<div class="ar" style="left:1654px;top:490px"></div>
<div class="ch" style="left:1687px;top:486px"></div>
<div class="ar" style="left:1709px;top:490px"></div>
<div class="ch" style="left:1742px;top:486px"></div>
<div class="ar" style="left:1764px;top:490px"></div>
<div class="ch" style="left:1797px;top:486px"></div>
<div class="ar" style="left:1819px;top:490px"></div>
<div class="ch" style="left:1852px;top:486px"></div>
<div class="ar" style="left:1874px;top:490px"></div>
<div class="ch" style="left:202px;top:507px"></div>
<div class="ar" style="left:224px;top:511px"></div>
<div class="ch" style="left:257px;top:507px"></div>
<div class="ar" style="left:279px;top:511px"></div>
<div class="ch" style="left:312px;top:507px"></div>
<div class="ar" style="left:334px;top:511px"></div>
<div class="ch" style="left:367px;top:507px"></div>
<div class="ar" style="left:389px;top:511px"></div>
<div class="ch" style="left:422px;top:507px"></div>
<div class="ar" style="left:444px;top:511px"></div>
<div class="ch" style="left:477px;top:507px"></div>
<div class="ar" style="left:499px;top:511px"></div>
<div class="ch" style="left:532px;top:507px"></div>
<div class="ar" style="left:554px;top:511px"></div>
<div class="ch" style="left:587px;top:507px"></div>
<div class="ar" style="left:609px;top:511px"></div>
<div class="ch" style="left:642px;top:507px"></div>
<div class="ar" style="left:664px;top:511px"></div>
<div class="ch" style="left:697px;top:507px"></div>
<div class="ar" style="left:719px;top:511px"></div>
<div class="ch" style="left:752px;top:507px"></div>
<div class="ar" style="left:774px;top:511px"></div>
<div class="ch" style="left:807px;top:507px"></div>
<div class="ar" style="left:829px;top:511px"></div>
<div class="ch" style="left:862px;top:507px"></div>
<div class="ar" style="left:884px;top:511px"></div>
<div class="ch" style="left:917px;top:507px"></div>
<div class="ar" style="left:939px;top:511px"></div>
<div class="ch" style="left:972px;top:507px"></div>
<div class="ar" style="left:994px;top:511px"></div>
<div class="ch" style="left:1027px;top:507px"></div>
<div class="ar" style="left:1049px;top:511px"></div>
<div class="ch" style="left:1082px;top:507px"></div>
<div class="ar" style="left:1104px;top:511px"></div>
<div class="ch" style="left:1137px;top:507px"></div>
<div class="ar" style="left:1159px;top:511px"></div>
<div class="ch" style="left:1192px;top:507px"></div>
<div class="ar" style="left:1214px;top:511px"></div>
<div class="ch" style="left:1247px;top:507px"></div>
<div class="ar" style="left:1269px;top:511px"></div>
<div class="ch" style="left:1302px;top:507px"></div>
<div class="ar" style="left:1324px;top:511px"></div>
<div class="ch" style="left:1357px;top:507px"></div>
<div class="ar" style="left:1379px;top:511px"></div>
<div class="ch" style="left:1412px;top:507px"></div>
<div class="ar" style="left:1434px;top:511px"></div>
<div class="ch" style="left:1467px;top:507px;background:#bfe1f6"></div>
<div class="ar" style="left:1489px;top:511px"></div>
<div class="cl" style="left:1475px;top:507px">P</div>
<div class="ch" style="left:1522px;top:507px;background:#bfe1f6"></div>
<div class="ar" style="left:1544px;top:511px"></div>
<div class="cl" style="left:1530px;top:507px">P</div>
<div class="ch" style="left:1577px;top:507px;background:#bfe1f6"></div>
<div class="ar" style="left:1599px;top:511px"></div>
<div class="cl" style="left:1585px;top:507px">P</div>
<div class="ch" style="left:1632px;top:507px;background:#bfe1f6"></div>
<div class="ar" style="left:1654px;top:511px"></div>
<div class="cl" style="left:1640px;top:507px">P</div>
<div class="ch" style="left:1687px;top:507px;background:#bfe1f6"></div>
<div class="ar" style="left:1709px;top:511px"></div>
<div class="cl" style="left:1695px;top:507px">P</div>
<div class="ch" style="left:1742px;top:507px"></div>
<div class="ar" style="left:1764px;top:511px"></div>
<div class="ch" style="left:1797px;top:507px"></div>
<div class="ar" style="left:1819px;top:511px"></div>
<div class="ch" style="left:1852px;top:507px"></div>
<div class="ar" style="left:1874px;top:511px"></div>
<div class="ch" style="left:202px;top:528px"></div>
<div class="ar" style="left:224px;top:532px"></div>
<div class="ch" style="left:257px;top:528px"></div>
<div class="ar" style="left:279px;top:532px"></div>
<div class="ch" style="left:312px;top:528px"></div>
<div class="ar" style="left:334px;top:532px"></div>
<div class="ch" style="left:367px;top:528px"></div>
<div class="ar" style="left:389px;top:532px"></div>
<div class="ch" style="left:422px;top:528px"></div>
<div class="ar" style="left:444px;top:532px"></div>
<div class="ch" style="left:477px;top:528px"></div>
<div class="ar" style="left:499px;top:532px"></div>
<div class="ch" style="left:532px;top:528px"></div>
<div class="ar" style="left:554px;top:532px"></div>
<div class="ch" style="left:587px;top:528px"></div>
<div class="ar" style="left:609px;top:532px"></div>
<div class="ch" style="left:642px;top:528px"></div>
<div class="ar" style="left:664px;top:532px"></div>
<div class="ch" style="left:697px;top:528px"></div>
<div class="ar" style="left:719px;top:532px"></div>
<div class="ch" style="left:752px;top:528px"></div>
<div class="ar" style="left:774px;top:532px"></div>
<div class="ch" style="left:807px;top:528px"></div>
<div class="ar" style="left:829px;top:532px"></div>
<div class="ch" style="left:862px;top:528px"></div>
<div class="ar" style="left:884px;top:532px"></div>
<div class="ch" style="left:917px;top:528px"></div>
<div class="ar" style="left:939px;top:532px"></div>
<div class="ch" style="left:972px;top:528px"></div>
<div class="ar" style="left:994px;top:532px"></div>
<div class="ch" style="left:1027px;top:528px"></div>
<div class="ar" style="left:1049px;top:532px"></div>
<div class="ch" style="left:1082px;top:528px"></div>
<div class="ar" style="left:1104px;top:532px"></div>
<div class="ch" style="left:1137px;top:528px"></div>
<div class="ar" style="left:1159px;top:532px"></div>
<div class="ch" style="left:1192px;top:528px"></div>
<div class="ar" style="left:1214px;top:532px"></div>
<div class="ch" style="left:1247px;top:528px"></div>
<div class="ar" style="left:1269px;top:532px"></div>
<div class="ch" style="left:1302px;top:528px"></div>
<div class="ar" style="left:1324px;top:532px"></div>
<div class="ch" style="left:1357px;top:528px"></div>
<div class="ar" style="left:1379px;top:532px"></div>
<div class="ch" style="left:1412px;top:528px"></div>
<div class="ar" style="left:1434px;top:532px"></div>
<div class="ch" style="left:1467px;top:528px"></div>
<div class="ar" style="left:1489px;top:532px"></div>
<div class="ch" style="left:1522px;top:528px"></div>
<div class="ar" style="left:1544px;top:532px"></div>
<div class="ch" style="left:1577px;top:528px"></div>
<div class="ar" style="left:1599px;top:532px"></div>
<div class="ch" style="left:1632px;top:528px"></div>
<div class="ar" style="left:1654px;top:532px"></div>
<div class="ch" style="left:1687px;top:528px"></div>
<div class="ar" style="left:1709px;top:532px"></div>
<div class="ch" style="left:1742px;top:528px"></div>
<div class="ar" style="left:1764px;top:532px"></div>
<div class="ch" style="left:1797px;top:528px"></div>
<div class="ar" style="left:1819px;top:532px"></div>
<div class="ch" style="left:1852px;top:528px"></div>
<div class="ar" style="left:1874px;top:532px"></div>
<div class="ch" style="left:202px;top:549px"></div>
<div class="ar" style="left:224px;top:553px"></div>
<div class="ch" style="left:257px;top:549px"></div>
<div class="ar" style="left:279px;top:553px"></div>
<div class="ch" style="left:312px;top:549px"></div>
<div class="ar" style="left:334px;top:553px"></div>
<div class="ch" style="left:367px;top:549px"></div>
<div class="ar" style="left:389px;top:553px"></div>
<div class="ch" style="left:422px;top:549px"></div>
<div class="ar" style="left:444px;top:553px"></div>
<div class="ch" style="left:477px;top:549px"></div>
<div class="ar" style="left:499px;top:553px"></div>
<div class="ch" style="left:532px;top:549px"></div>
<div class="ar" style="left:554px;top:553px"></div>
<div class="ch" style="left:587px;top:549px"></div>
<div class="ar" style="left:609px;top:553px"></div>
<div class="ch" style="left:642px;top:549px"></div>
<div class="ar" style="left:664px;top:553px"></div>
<div class="ch" style="left:697px;top:549px"></div>
<div class="ar" style="left:719px;top:553px"></div>
<div class="ch" style="left:752px;top:549px"></div>
<div class="ar" style="left:774px;top:553px"></div>
<div class="ch" style="left:807px;top:549px"></div>
<div class="ar" style="left:829px;top:553px"></div>
<div class="ch" style="left:862px;top:549px"></div>
<div class="ar" style="left:884px;top:553px"></div>
<div class="ch" style="left:917px;top:549px"></div>
<div class="ar" style="left:939px;top:553px"></div>
<div class="ch" style="left:972px;top:549px"></div>
<div class="ar" style="left:994px;top:553px"></div>
<div class="ch" style="left:1027px;top:549px"></div>
<div class="ar" style="left:1049px;top:553px"></div>
<div class="ch" style="left:1082px;top:549px"></div>
<div class="ar" style="left:1104px;top:553px"></div>
<div class="ch" style="left:1137px;top:549px"></div>
<div class="ar" style="left:1159px;top:553px"></div>
<div class="ch" style="left:1192px;top:549px"></div>
<div class="ar" style="left:1214px;top:553px"></div>
<div class="ch" style="left:1247px;top:549px"></div>
<div class="ar" style="left:1269px;top:553px"></div>
<div class="ch" style="left:1302px;top:549px"></div>
<div class="ar" style="left:1324px;top:553px"></div>
<div class="ch" style="left:1357px;top:549px"></div>
<div class="ar" style="left:1379px;top:553px"></div>
<div class="ch" style="left:1412px;top:549px"></div>
<div class="ar" style="left:1434px;top:553px"></div>
<div class="ch" style="left:1467px;top:549px"></div>
<div class="ar" style="left:1489px;top:553px"></div>
<div class="ch" style="left:1522px;top:549px"></div>
<div class="ar" style="left:1544px;top:553px"></div>
<div class="ch" style="left:1577px;top:549px"></div>
<div class="ar" style="left:1599px;top:553px"></div>
<div class="ch" style="left:1632px;top:549px"></div>
<div class="ar" style="left:1654px;top:553px"></div>
<div class="ch" style="left:1687px;top:549px"></div>
<div class="ar" style="left:1709px;top:553px"></div>
<div class="ch" style="left:1742px;top:549px"></div>
<div class="ar" style="left:1764px;top:553px"></div>
<div class="ch" style="left:1797px;top:549px"></div>
<div class="ar" style="left:1819px;top:553px"></div>
<div class="ch" style="left:1852px;top:549px"></div>
<div class="ar" style="left:1874px;top:553px"></div>
<div class="ch" style="left:202px;top:570px"></div>
<div class="ar" style="left:224px;top:574px"></div>
<div class="ch" style="left:257px;top:570px"></div>
<div class="ar" style="left:279px;top:574px"></div>
<div class="ch" style="left:312px;top:570px"></div>
<div class="ar" style="left:334px;top:574px"></div>
<div class="ch" style="left:367px;top:570px"></div>
<div class="ar" style="left:389px;top:574px"></div>
<div class="ch" style="left:422px;top:570px"></div>
<div class="ar" style="left:444px;top:574px"></div>
<div class="ch" style="left:477px;top:570px"></div>
<div class="ar" style="left:499px;top:574px"></div>
<div class="ch" style="left:532px;top:570px"></div>
<div class="ar" style="left:554px;top:574px"></div>
<div class="ch" style="left:587px;top:570px"></div>
<div class="ar" style="left:609px;top:574px"></div>
<div class="ch" style="left:642px;top:570px"></div>
<div class="ar" style="left:664px;top:574px"></div>
<div class="ch" style="left:697px;top:570px"></div>
<div class="ar" style="left:719px;top:574px"></div>
<div class="ch" style="left:752px;top:570px"></div>
<div class="ar" style="left:774px;top:574px"></div>
<div class="ch" style="left:807px;top:570px"></div>
<div class="ar" style="left:829px;top:574px"></div>
<div class="ch" style="left:862px;top:570px"></div>
<div class="ar" style="left:884px;top:574px"></div>
<div class="ch" style="left:917px;top:570px"></div>
<div class="ar" style="left:939px;top:574px"></div>
<div class="ch" style="left:972px;top:570px"></div>
<div class="ar" style="left:994px;top:574px"></div>
<div class="ch" style="left:1027px;top:570px"></div>
<div class="ar" style="left:1049px;top:574px"></div>
<div class="ch" style="left:1082px;top:570px"></div>
<div class="ar" style="left:1104px;top:574px"></div>
<div class="ch" style="left:1137px;top:570px"></div>
<div class="ar" style="left:1159px;top:574px"></div>
<div class="ch" style="left:1192px;top:570px"></div>
<div class="ar" style="left:1214px;top:574px"></div>
<div class="ch" style="left:1247px;top:570px"></div>
<div class="ar" style="left:1269px;top:574px"></div>
<div class="ch" style="left:1302px;top:570px"></div>
<div class="ar" style="left:1324px;top:574px"></div>
<div class="ch" style="left:1357px;top:570px"></div>
<div class="ar" style="left:1379px;top:574px"></div>
<div class="ch" style="left:1412px;top:570px"></div>
<div class="ar" style="left:1434px;top:574px"></div>
<div class="ch" style="left:1467px;top:570px"></div>
<div class="ar" style="left:1489px;top:574px"></div>
<div class="ch" style="left:1522px;top:570px"></div>
<div class="ar" style="left:1544px;top:574px"></div>
<div class="ch" style="left:1577px;top:570px"></div>
<div class="ar" style="left:1599px;top:574px"></div>
<div class="ch" style="left:1632px;top:570px"></div>
<div class="ar" style="left:1654px;top:574px"></div>
<div class="ch" style="left:1687px;top:570px"></div>
<div class="ar" style="left:1709px;top:574px"></div>
<div class="ch" style="left:1742px;top:570px"></div>
<div class="ar" style="left:1764px;top:574px"></div>
<div class="ch" style="left:1797px;top:570px"></div>
<div class="ar" style="left:1819px;top:574px"></div>
<div class="ch" style="left:1852px;top:570px"></div>
<div class="ar" style="left:1874px;top:574px"></div>
<div class="a" style="left:1898px;top:142px;width:10px;height:459px;background:#f8f9f8"></div>
<div class="a" style="left:1908px;top:142px;width:1px;height:459px;background:#e3e3e3"></div>
<div class="a" style="left:1909px;top:142px;width:5px;height:459px;background:#fcfcfc"></div>
<div class="a" style="left:1909px;top:142px;width:5px;height:23px;background:#f3f3f3;border-bottom:1px solid #e0e0e0"></div>
<div class="a" style="left:1910px;top:167px;width:6px;height:26px;border-radius:3px;background:#dadce0"></div>
</body></html>
